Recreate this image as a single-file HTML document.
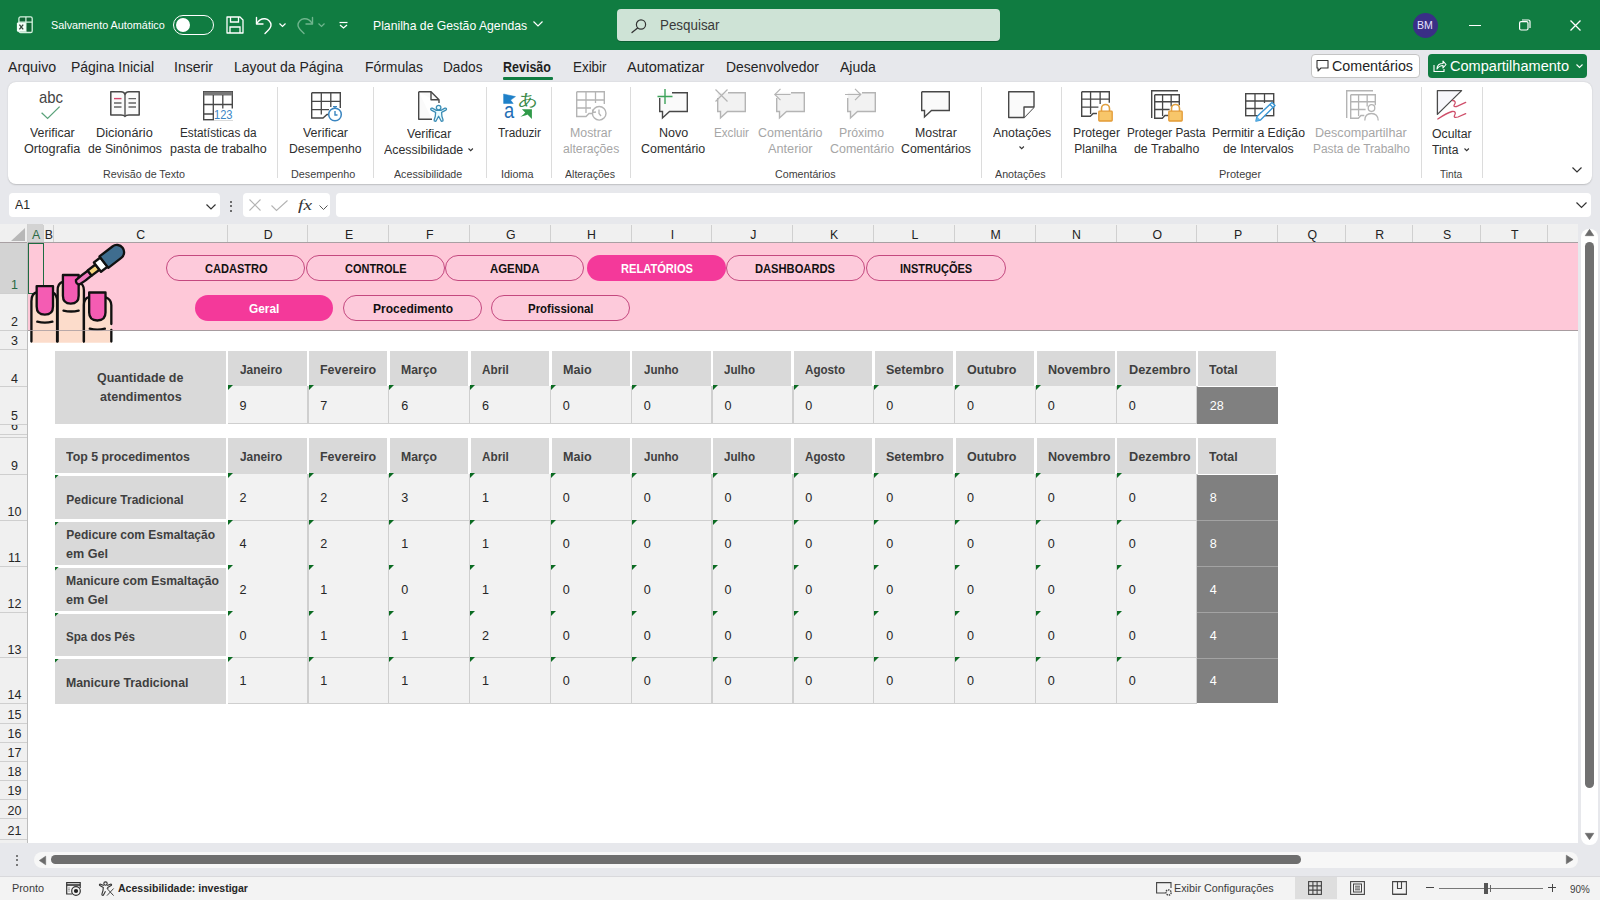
<!DOCTYPE html><html><head><meta charset="utf-8"><style>
html,body{margin:0;padding:0;width:1600px;height:900px;overflow:hidden;background:#fff;font-family:"Liberation Sans",sans-serif}
.t{position:absolute;white-space:nowrap;line-height:1}
svg{overflow:visible}
</style></head><body>
<div style="position:absolute;left:0px;top:0px;width:1600px;height:50px;background:#107C41"></div>
<svg style="position:absolute;left:16px;top:16px;" width="18" height="18" viewBox="0 0 18 18" fill="none"><rect x="2.9" y="0.9" width="13.3" height="15.6" rx="1.6" stroke="#d5f3e0" stroke-width="1.3" fill="#0f6534"/><path d="M9.9 0.9V16.5M2.9 6.1H16.2" stroke="#d5f3e0" stroke-width="1.2"/><rect x="0.9" y="6.4" width="9" height="9.3" rx="1.2" fill="#f2fff7"/><path d="M3.4 8.6L7.2 13.4M7.2 8.6L3.4 13.4" stroke="#34473b" stroke-width="1.3"/></svg>
<div class="t" style="left:50.60px;top:20.09px;font-size:11px;color:#fff;font-weight:400;transform:scaleX(0.9842);transform-origin:0 0;">Salvamento Automático</div>
<div style="position:absolute;left:172.5px;top:14.5px;width:41px;height:20px;border:1.5px solid #fff;border-radius:11px;box-sizing:border-box"></div>
<div style="position:absolute;left:175.5px;top:17.5px;width:14px;height:14px;background:#fff;border-radius:50%"></div>
<svg style="position:absolute;left:226px;top:16px;" width="18" height="18" viewBox="0 0 18 18" fill="none"><path d="M1 1H14L17 4V17H1Z" stroke="#fff" stroke-width="1.3" stroke-linejoin="round"/><path d="M4.5 1V6H12.5V1M4 17V11H14V17" stroke="#fff" stroke-width="1.3"/></svg>
<svg style="position:absolute;left:255px;top:16px;" width="18" height="18" viewBox="0 0 18 18" fill="none"><path d="M1.5 1.5V8H8" stroke="#fff" stroke-width="1.4" stroke-linecap="round" stroke-linejoin="round"/><path d="M1.8 7.5C4 4 7 2.5 10 2.8C13.5 3.2 16 6 16 9C16 11.5 14.5 13 12.5 15L10 17.5" stroke="#fff" stroke-width="1.4" stroke-linecap="round"/></svg>
<svg style="position:absolute;left:279px;top:23px;" width="7" height="4" viewBox="0 0 7 4" fill="none"><path d="M0.5 0.5L3.5 3.5L6.5 0.5" stroke="#fff" stroke-width="1.2"/></svg>
<svg style="position:absolute;left:296px;top:16px;" width="18" height="18" viewBox="0 0 18 18" fill="none"><path d="M16.5 1.5V8H10" stroke="#6fb58d" stroke-width="1.4" stroke-linecap="round" stroke-linejoin="round"/><path d="M16.2 7.5C14 4 11 2.5 8 2.8C4.5 3.2 2 6 2 9C2 11.5 3.5 13 5.5 15L8 17.5" stroke="#6fb58d" stroke-width="1.4" stroke-linecap="round"/></svg>
<svg style="position:absolute;left:318px;top:23px;" width="7" height="4" viewBox="0 0 7 4" fill="none"><path d="M0.5 0.5L3.5 3.5L6.5 0.5" stroke="#6fb58d" stroke-width="1.2"/></svg>
<svg style="position:absolute;left:339px;top:22px;" width="9" height="7" viewBox="0 0 9 7" fill="none"><path d="M0.5 0.5H8.5" stroke="#fff" stroke-width="1.2"/><path d="M1 3L4.5 6L8 3" stroke="#fff" stroke-width="1.3"/></svg>
<div class="t" style="left:373.30px;top:19.00px;font-size:13px;color:#fff;font-weight:400;transform:scaleX(0.9395);transform-origin:0 0;">Planilha de Gestão Agendas</div>
<svg style="position:absolute;left:532.5px;top:21px;" width="10" height="6" viewBox="0 0 10 6" fill="none"><path d="M0.5 0.5L5 5L9.5 0.5" stroke="#fff" stroke-width="1.2"/></svg>
<div style="position:absolute;left:617px;top:8.75px;width:382.5px;height:32.5px;background:#CEE3D6;border-radius:4px;box-shadow:0 1px 0 #0c5f33"></div>
<svg style="position:absolute;left:631px;top:18.5px;" width="16" height="14" viewBox="0 0 16 14" fill="none"><circle cx="10" cy="5.5" r="4.6" stroke="#333" stroke-width="1.2"/><path d="M6.6 9L1 13.6" stroke="#333" stroke-width="1.3" stroke-linecap="round"/></svg>
<div class="t" style="left:660.00px;top:18.15px;font-size:14px;color:#3a3a3a;font-weight:400;transform:scaleX(0.9558);transform-origin:0 0;">Pesquisar</div>
<div style="position:absolute;left:1412.5px;top:12.5px;width:25px;height:25px;background:#3a2f86;border-radius:50%"></div>
<div class="t" style="left:1417.12px;top:20.11px;font-size:10.5px;color:#e6e2ff;font-weight:400;">BM</div>
<div style="position:absolute;left:1468.5px;top:24.5px;width:12px;height:1.2px;background:#fff"></div>
<svg style="position:absolute;left:1519px;top:19px;" width="12" height="12" viewBox="0 0 12 12" fill="none"><rect x="0.6" y="2.6" width="8.4" height="8.4" rx="1.5" stroke="#fff" stroke-width="1.2"/><path d="M3 1H9.5A1.5 1.5 0 0 1 11 2.5V9" stroke="#fff" stroke-width="1.2"/></svg>
<svg style="position:absolute;left:1569.5px;top:19.5px;" width="11" height="11" viewBox="0 0 11 11" fill="none"><path d="M0.5 0.5L10.5 10.5M10.5 0.5L0.5 10.5" stroke="#fff" stroke-width="1.3"/></svg>
<div style="position:absolute;left:0px;top:50px;width:1600px;height:32px;background:#E7E8EC"></div>
<div class="t" style="left:7.80px;top:60.45px;font-size:14px;color:#242424;font-weight:400;transform:scaleX(1.0147);transform-origin:0 0;">Arquivo</div>
<div class="t" style="left:71.00px;top:60.45px;font-size:14px;color:#242424;font-weight:400;transform:scaleX(0.9970);transform-origin:0 0;">Página Inicial</div>
<div class="t" style="left:174.00px;top:60.45px;font-size:14px;color:#242424;font-weight:400;transform:scaleX(1.0032);transform-origin:0 0;">Inserir</div>
<div class="t" style="left:234.00px;top:60.45px;font-size:14px;color:#242424;font-weight:400;">Layout da Página</div>
<div class="t" style="left:365.00px;top:60.45px;font-size:14px;color:#242424;font-weight:400;transform:scaleX(0.9936);transform-origin:0 0;">Fórmulas</div>
<div class="t" style="left:443.00px;top:60.45px;font-size:14px;color:#242424;font-weight:400;transform:scaleX(0.9753);transform-origin:0 0;">Dados</div>
<div class="t" style="left:503.00px;top:60.45px;font-size:14px;color:#1f1f1f;font-weight:700;transform:scaleX(0.8930);transform-origin:0 0;">Revisão</div>
<div class="t" style="left:572.50px;top:60.45px;font-size:14px;color:#242424;font-weight:400;transform:scaleX(0.9571);transform-origin:0 0;">Exibir</div>
<div class="t" style="left:627.00px;top:60.45px;font-size:14px;color:#242424;font-weight:400;transform:scaleX(1.0368);transform-origin:0 0;">Automatizar</div>
<div class="t" style="left:726.00px;top:60.45px;font-size:14px;color:#242424;font-weight:400;transform:scaleX(0.9933);transform-origin:0 0;">Desenvolvedor</div>
<div class="t" style="left:840.00px;top:60.45px;font-size:14px;color:#242424;font-weight:400;transform:scaleX(1.0035);transform-origin:0 0;">Ajuda</div>
<div style="position:absolute;left:502.5px;top:77.3px;width:50.5px;height:2.4px;background:#107C41;border-radius:1px"></div>
<div style="position:absolute;left:1310.5px;top:53.75px;width:109px;height:24.5px;background:#fff;border:1px solid #c4c4c4;border-radius:4px;box-sizing:border-box"></div>
<svg style="position:absolute;left:1316px;top:59px;" width="13" height="13" viewBox="0 0 13 13" fill="none"><path d="M1 1.5H12V9H5L2 12V9H1Z" stroke="#333" stroke-width="1.1" stroke-linejoin="round"/></svg>
<div class="t" style="left:1331.50px;top:59.15px;font-size:14px;color:#242424;font-weight:400;transform:scaleX(1.0205);transform-origin:0 0;">Comentários</div>
<div style="position:absolute;left:1428px;top:53.75px;width:159px;height:24.5px;background:#107C41;border-radius:4px"></div>
<svg style="position:absolute;left:1432.5px;top:58.5px;" width="14" height="14" viewBox="0 0 14 14" fill="none"><path d="M1 6V12.5H11V10" stroke="#fff" stroke-width="1.1"/><path d="M4 10C4 6 6.5 4.5 10 4.5V2L13 5.5L10 9V6.5C7 6.5 5.5 7.8 4 10Z" stroke="#fff" stroke-width="1.1" stroke-linejoin="round"/></svg>
<div class="t" style="left:1450.00px;top:59.15px;font-size:14px;color:#fff;font-weight:400;transform:scaleX(1.0404);transform-origin:0 0;">Compartilhamento</div>
<svg style="position:absolute;left:1575.5px;top:63.5px;" width="7" height="4" viewBox="0 0 7 4" fill="none"><path d="M0.5 0.5L3.5 3.5L6.5 0.5" stroke="#fff" stroke-width="1.1"/></svg>
<div style="position:absolute;left:0px;top:82px;width:1600px;height:141.5px;background:#E7E8EC"></div>
<div style="position:absolute;left:8.3px;top:81.7px;width:1584px;height:102.5px;background:#fff;border-radius:8px;box-shadow:0 0.5px 1.5px rgba(0,0,0,0.18)"></div>
<div class="t" style="left:29.50px;top:126.84px;font-size:12px;color:#2e2e2e;font-weight:400;transform:scaleX(1.0317);transform-origin:0 0;">Verificar</div>
<div class="t" style="left:23.75px;top:143.14px;font-size:12px;color:#2e2e2e;font-weight:400;transform:scaleX(1.0539);transform-origin:0 0;">Ortografia</div>
<div class="t" style="left:96.25px;top:126.84px;font-size:12px;color:#2e2e2e;font-weight:400;transform:scaleX(1.0632);transform-origin:0 0;">Dicionário</div>
<div class="t" style="left:88.00px;top:143.14px;font-size:12px;color:#2e2e2e;font-weight:400;transform:scaleX(1.0172);transform-origin:0 0;">de Sinônimos</div>
<div class="t" style="left:179.50px;top:126.84px;font-size:12px;color:#2e2e2e;font-weight:400;transform:scaleX(0.9824);transform-origin:0 0;">Estatísticas da</div>
<div class="t" style="left:169.50px;top:143.14px;font-size:12px;color:#2e2e2e;font-weight:400;transform:scaleX(1.0431);transform-origin:0 0;">pasta de trabalho</div>
<div class="t" style="left:102.50px;top:169.11px;font-size:10.5px;color:#3d3d3d;font-weight:400;transform:scaleX(1.0202);transform-origin:0 0;">Revisão de Texto</div>
<div style="position:absolute;left:277px;top:87px;width:1px;height:91px;background:#dcdcdc"></div>
<div class="t" style="left:302.50px;top:126.84px;font-size:12px;color:#2e2e2e;font-weight:400;transform:scaleX(1.0375);transform-origin:0 0;">Verificar</div>
<div class="t" style="left:288.75px;top:143.14px;font-size:12px;color:#2e2e2e;font-weight:400;transform:scaleX(1.0158);transform-origin:0 0;">Desempenho</div>
<div class="t" style="left:291.25px;top:169.11px;font-size:10.5px;color:#3d3d3d;font-weight:400;transform:scaleX(1.0280);transform-origin:0 0;">Desempenho</div>
<div style="position:absolute;left:372.5px;top:87px;width:1px;height:91px;background:#dcdcdc"></div>
<div class="t" style="left:407.00px;top:127.84px;font-size:12px;color:#2e2e2e;font-weight:400;transform:scaleX(1.0202);transform-origin:0 0;">Verificar</div>
<div class="t" style="left:383.75px;top:144.34px;font-size:12px;color:#2e2e2e;font-weight:400;transform:scaleX(1.0326);transform-origin:0 0;">Acessibilidade</div>
<svg style="position:absolute;left:468.2px;top:147.8px;" width="5.4" height="3.2" viewBox="0 0 5.4 3.2" fill="none"><path d="M0.5 0.5L2.7 2.7L4.9 0.5" stroke="#333" stroke-width="1.1"/></svg>
<div class="t" style="left:393.75px;top:169.11px;font-size:10.5px;color:#3d3d3d;font-weight:400;transform:scaleX(1.0168);transform-origin:0 0;">Acessibilidade</div>
<div style="position:absolute;left:485.5px;top:87px;width:1px;height:91px;background:#dcdcdc"></div>
<div class="t" style="left:497.50px;top:126.84px;font-size:12px;color:#2e2e2e;font-weight:400;transform:scaleX(0.9857);transform-origin:0 0;">Traduzir</div>
<div class="t" style="left:501.25px;top:169.11px;font-size:10.5px;color:#3d3d3d;font-weight:400;transform:scaleX(1.0317);transform-origin:0 0;">Idioma</div>
<div style="position:absolute;left:551.25px;top:87px;width:1px;height:91px;background:#dcdcdc"></div>
<div class="t" style="left:569.50px;top:126.84px;font-size:12px;color:#a6a6a6;font-weight:400;transform:scaleX(1.0277);transform-origin:0 0;">Mostrar</div>
<div class="t" style="left:562.50px;top:143.14px;font-size:12px;color:#a6a6a6;font-weight:400;transform:scaleX(1.0158);transform-origin:0 0;">alterações</div>
<div class="t" style="left:564.50px;top:169.11px;font-size:10.5px;color:#3d3d3d;font-weight:400;transform:scaleX(1.0076);transform-origin:0 0;">Alterações</div>
<div style="position:absolute;left:629.5px;top:87px;width:1px;height:91px;background:#dcdcdc"></div>
<div class="t" style="left:658.75px;top:126.84px;font-size:12px;color:#2e2e2e;font-weight:400;transform:scaleX(1.0446);transform-origin:0 0;">Novo</div>
<div class="t" style="left:640.75px;top:143.14px;font-size:12px;color:#2e2e2e;font-weight:400;transform:scaleX(1.0363);transform-origin:0 0;">Comentário</div>
<div class="t" style="left:713.75px;top:126.84px;font-size:12px;color:#a6a6a6;font-weight:400;transform:scaleX(0.9722);transform-origin:0 0;">Excluir</div>
<div class="t" style="left:757.50px;top:126.84px;font-size:12px;color:#a6a6a6;font-weight:400;transform:scaleX(1.0403);transform-origin:0 0;">Comentário</div>
<div class="t" style="left:768.00px;top:143.14px;font-size:12px;color:#a6a6a6;font-weight:400;transform:scaleX(1.0595);transform-origin:0 0;">Anterior</div>
<div class="t" style="left:838.75px;top:126.84px;font-size:12px;color:#a6a6a6;font-weight:400;transform:scaleX(1.0227);transform-origin:0 0;">Próximo</div>
<div class="t" style="left:829.50px;top:143.14px;font-size:12px;color:#a6a6a6;font-weight:400;transform:scaleX(1.0363);transform-origin:0 0;">Comentário</div>
<div class="t" style="left:914.50px;top:126.84px;font-size:12px;color:#2e2e2e;font-weight:400;transform:scaleX(1.0277);transform-origin:0 0;">Mostrar</div>
<div class="t" style="left:900.75px;top:143.14px;font-size:12px;color:#2e2e2e;font-weight:400;transform:scaleX(1.0294);transform-origin:0 0;">Comentários</div>
<div class="t" style="left:774.50px;top:169.11px;font-size:10.5px;color:#3d3d3d;font-weight:400;transform:scaleX(1.0168);transform-origin:0 0;">Comentários</div>
<div style="position:absolute;left:981.25px;top:87px;width:1px;height:91px;background:#dcdcdc"></div>
<div class="t" style="left:992.50px;top:126.84px;font-size:12px;color:#2e2e2e;font-weight:400;transform:scaleX(1.0264);transform-origin:0 0;">Anotações</div>
<svg style="position:absolute;left:1018.6px;top:146.3px;" width="5.4" height="3.2" viewBox="0 0 5.4 3.2" fill="none"><path d="M0.5 0.5L2.7 2.7L4.9 0.5" stroke="#333" stroke-width="1.1"/></svg>
<div class="t" style="left:995.00px;top:169.11px;font-size:10.5px;color:#3d3d3d;font-weight:400;transform:scaleX(1.0176);transform-origin:0 0;">Anotações</div>
<div style="position:absolute;left:1061.25px;top:87px;width:1px;height:91px;background:#dcdcdc"></div>
<div class="t" style="left:1072.50px;top:126.84px;font-size:12px;color:#2e2e2e;font-weight:400;transform:scaleX(1.0217);transform-origin:0 0;">Proteger</div>
<div class="t" style="left:1074.25px;top:143.14px;font-size:12px;color:#2e2e2e;font-weight:400;">Planilha</div>
<div class="t" style="left:1126.75px;top:126.84px;font-size:12px;color:#2e2e2e;font-weight:400;transform:scaleX(0.9816);transform-origin:0 0;">Proteger Pasta</div>
<div class="t" style="left:1133.75px;top:143.14px;font-size:12px;color:#2e2e2e;font-weight:400;transform:scaleX(1.0296);transform-origin:0 0;">de Trabalho</div>
<div class="t" style="left:1212.25px;top:126.84px;font-size:12px;color:#2e2e2e;font-weight:400;transform:scaleX(1.0172);transform-origin:0 0;">Permitir a Edição</div>
<div class="t" style="left:1223.25px;top:143.14px;font-size:12px;color:#2e2e2e;font-weight:400;transform:scaleX(1.0291);transform-origin:0 0;">de Intervalos</div>
<div class="t" style="left:1315.40px;top:126.84px;font-size:12px;color:#a6a6a6;font-weight:400;transform:scaleX(1.0484);transform-origin:0 0;">Descompartilhar</div>
<div class="t" style="left:1312.60px;top:143.14px;font-size:12px;color:#a6a6a6;font-weight:400;transform:scaleX(0.9941);transform-origin:0 0;">Pasta de Trabalho</div>
<div class="t" style="left:1219.10px;top:169.11px;font-size:10.5px;color:#3d3d3d;font-weight:400;transform:scaleX(1.0460);transform-origin:0 0;">Proteger</div>
<div style="position:absolute;left:1420.6px;top:87px;width:1px;height:91px;background:#dcdcdc"></div>
<div class="t" style="left:1432.00px;top:127.84px;font-size:12px;color:#2e2e2e;font-weight:400;transform:scaleX(1.0227);transform-origin:0 0;">Ocultar</div>
<div class="t" style="left:1432.00px;top:144.34px;font-size:12px;color:#2e2e2e;font-weight:400;transform:scaleX(1.0057);transform-origin:0 0;">Tinta</div>
<svg style="position:absolute;left:1464px;top:147.8px;" width="5.4" height="3.2" viewBox="0 0 5.4 3.2" fill="none"><path d="M0.5 0.5L2.7 2.7L4.9 0.5" stroke="#333" stroke-width="1.1"/></svg>
<div class="t" style="left:1439.80px;top:169.11px;font-size:10.5px;color:#3d3d3d;font-weight:400;transform:scaleX(0.9652);transform-origin:0 0;">Tinta</div>
<div style="position:absolute;left:1482px;top:87px;width:1px;height:91px;background:#dcdcdc"></div>
<svg style="position:absolute;left:1572px;top:167px;" width="10" height="6" viewBox="0 0 10 6" fill="none"><path d="M0.5 0.5L5 5L9.5 0.5" stroke="#333" stroke-width="1.2"/></svg>
<div class="t" style="left:39.00px;top:88.61px;font-size:17px;color:#444;font-weight:400;transform:scaleX(0.8767);transform-origin:0 0;">abc</div>
<svg style="position:absolute;left:41px;top:106px;" width="19" height="13" viewBox="0 0 19 13" fill="none"><path d="M0.6 6.8L6.6 12.4L18.6 0.6" stroke="#5aa27a" stroke-width="1.3"/></svg>
<svg style="position:absolute;left:109.5px;top:91.4px;" width="30" height="26" viewBox="0 0 30 26" fill="none"><path d="M0.8 0.8H11C13 0.8 14.5 2 15 3.5C15.5 2 17 0.8 19 0.8H29.2V24H19C17 24 15.5 24.6 15 25.5C14.5 24.6 13 24 11 24H0.8Z" stroke="#474747" stroke-width="1.5" stroke-linejoin="round" fill="#fafafa"/><path d="M15 3.5V25" stroke="#474747" stroke-width="1.3"/><path d="M4 7.6H11.5" stroke="#d2466c" stroke-width="1.4"/><path d="M4 12H11.5M4 16H11.5M18.5 7.6H26M18.5 12H26M18.5 16H26" stroke="#666" stroke-width="1.4"/></svg>
<svg style="position:absolute;left:203px;top:90.5px;" width="30" height="30" viewBox="0 0 30 30" fill="none"><rect x="0.7" y="0.7" width="28.6" height="28" stroke="#474747" stroke-width="1.4" fill="#fff"/><rect x="0.7" y="0.7" width="28.6" height="3.8" fill="#777"/><path d="M10.3 4V28.7M19.8 4V18M0.7 13.5H29M0.7 23H11" stroke="#474747" stroke-width="1.3"/><rect x="11" y="17.5" width="19" height="12" fill="#fff"/></svg>
<div class="t" style="left:213.50px;top:108.07px;font-size:13.5px;color:#3b86c6;font-weight:400;transform:scaleX(0.8222);transform-origin:0 0;">123</div>
<svg style="position:absolute;left:310.5px;top:91.5px;" width="32" height="30" viewBox="0 0 32 30" fill="none"><path d="M0.7 0.7H29.3V16M0.7 0.7V26H12L16 22.5H20" stroke="#474747" stroke-width="1.4" fill="none"/><path d="M10.3 1V22.5M19.8 1V15M0.7 9.3H29.3M0.7 17.7H18" stroke="#474747" stroke-width="1.3"/><circle cx="24" cy="22.5" r="6.3" stroke="#3a85c0" stroke-width="1.5" fill="#fff"/><path d="M24 19V23H26.5M22 14.6H26M24 14.6V16" stroke="#3a85c0" stroke-width="1.4"/></svg>
<svg style="position:absolute;left:417.7px;top:90.7px;" width="30" height="32" viewBox="0 0 30 32" fill="none"><path d="M0.7 0.7H13L21 8.7V12M14 28.3H0.7V0.7" stroke="#474747" stroke-width="1.4" stroke-linejoin="round" fill="#fafafa"/><path d="M13 0.7V8.7H21" stroke="#474747" stroke-width="1.4" stroke-linejoin="round" fill="none"/></svg>
<svg style="position:absolute;left:425px;top:100px;" width="25" height="25" viewBox="0 0 25 25" fill="none"><circle cx="13.6" cy="7.6" r="2.3" stroke="#3b8db5" stroke-width="1.3" fill="#e8fbff"/><path d="M11.3 10.3L7.3 8.2C6 7.6 5 9.4 6.3 10.2L10.6 12.4L10.3 16.3L9.2 19.8C8.8 21.3 10.8 21.8 11.3 20.5L13.6 16.3L15.9 20.5C16.4 21.8 18.4 21.3 18 19.8L16.9 16.3L16.6 12.4L20.9 10.2C22.2 9.4 21.2 7.6 19.9 8.2L15.9 10.3Z" stroke="#3b8db5" stroke-width="1.3" stroke-linejoin="round" fill="#e8fbff"/></svg>
<svg style="position:absolute;left:500px;top:88px;" width="36" height="34" viewBox="0 0 36 34" fill="none"><path d="M3.6 6L15.5 8.6L10.6 12.1L13.2 15.5H3.6Z" fill="#1f80c8" stroke="#1f80c8" stroke-width="0.5" stroke-linejoin="round"/><path d="M21.9 21.3H31.9V30.9L27.5 26.5C25.5 27.5 23 28.3 20.4 28.7C22.3 27.4 24.2 25.8 25.2 24.4Z" fill="#2f9a48"/></svg>
<div class="t" style="left:503.60px;top:100.28px;font-size:22px;color:#1f6fb5;font-weight:400;transform:scaleX(0.8327);transform-origin:0 0;">a</div>
<div class="t" style="left:517.70px;top:91.68px;font-size:15.5px;color:#3a8a48;font-weight:400;transform:scaleX(1.2301);transform-origin:0 0;font-family:sans-serif;">あ</div>
<svg style="position:absolute;left:576.4px;top:91.1px;" width="32" height="30" viewBox="0 0 32 30" fill="none"><path d="M0.7 0.7H28.3V13M0.7 0.7V25.5H10L13 22.5H16" stroke="#b4b4b4" stroke-width="1.4" fill="none"/><path d="M10 1V22M19.5 1V12M0.7 9H28M0.7 17H15" stroke="#b4b4b4" stroke-width="1.3"/><circle cx="23.2" cy="22.3" r="6.8" stroke="#b4b4b4" stroke-width="1.4" fill="#fff"/><path d="M23 18.5V22.5L25 25" stroke="#b4b4b4" stroke-width="1.3"/><path d="M16.5 18.5L17 21.5L20 21" stroke="#b4b4b4" stroke-width="1.3" fill="none"/></svg>
<svg style="position:absolute;left:659px;top:91.5px;" width="30" height="28" viewBox="0 0 30 28" fill="none"><path d="M0.7 0.7H28.3V19.5H10.5L3.5 26V19.5H0.7Z" fill="#fafafa"/><path d="M13 0.7H28.3V19.5H10.5L3.5 26V19.5H0.7V6" stroke="#474747" stroke-width="1.4" stroke-linejoin="miter" fill="none"/></svg>
<svg style="position:absolute;left:656.5px;top:88.5px;" width="16" height="16" viewBox="0 0 16 16" fill="none"><path d="M8 0V15M0.5 7.5H15.5" stroke="#3da35a" stroke-width="1.4"/></svg>
<svg style="position:absolute;left:717px;top:91.5px;" width="30" height="28" viewBox="0 0 30 28" fill="none"><path d="M0.7 0.7H28.3V19.5H10.5L3.5 26V19.5H0.7Z" fill="#f2f2f2"/><path d="M11 0.7H28.3V19.5H10.5L3.5 26V19.5H0.7V6" stroke="#b4b4b4" stroke-width="1.4" stroke-linejoin="miter" fill="none"/></svg>
<svg style="position:absolute;left:715px;top:88.5px;" width="13" height="13" viewBox="0 0 13 13" fill="none"><path d="M0.5 0.5L12.5 12.5M12.5 0.5L0.5 12.5" stroke="#b4b4b4" stroke-width="1.2"/></svg>
<svg style="position:absolute;left:775.6px;top:91.5px;" width="30" height="28" viewBox="0 0 30 28" fill="none"><path d="M0.7 0.7H28.3V19.5H10.5L3.5 26V19.5H0.7Z" fill="#f2f2f2"/><path d="M15 0.7H28.3V19.5H10.5L3.5 26V19.5H0.7V6" stroke="#b4b4b4" stroke-width="1.4" stroke-linejoin="miter" fill="none"/></svg>
<svg style="position:absolute;left:773.5px;top:88px;" width="17" height="13" viewBox="0 0 17 13" fill="none"><path d="M16.5 6.5H1M6.5 0.8L0.8 6.5L6.5 12.2" stroke="#b4b4b4" stroke-width="1.2"/></svg>
<svg style="position:absolute;left:847.3px;top:91.5px;" width="30" height="28" viewBox="0 0 30 28" fill="none"><path d="M0.7 0.7H28.3V19.5H10.5L3.5 26V19.5H0.7Z" fill="#f2f2f2"/><path d="M15 0.7H28.3V19.5H10.5L3.5 26V19.5H0.7V6" stroke="#b4b4b4" stroke-width="1.4" stroke-linejoin="miter" fill="none"/></svg>
<svg style="position:absolute;left:845px;top:88px;" width="17" height="13" viewBox="0 0 17 13" fill="none"><path d="M0 6.5H15.5M10 0.8L15.7 6.5L10 12.2" stroke="#b4b4b4" stroke-width="1.2"/></svg>
<svg style="position:absolute;left:921.2px;top:91.3px;" width="30" height="28" viewBox="0 0 30 28" fill="none"><path d="M0.7 0.7H28.3V19.5H10.5L3.5 26V19.5H0.7Z" fill="#fafafa"/><path d="M0.7 0.7H28.3V19.5H10.5L3.5 26V19.5H0.7V0.7" stroke="#474747" stroke-width="1.4" stroke-linejoin="miter" fill="none"/></svg>
<svg style="position:absolute;left:1008.2px;top:91.3px;" width="28" height="28" viewBox="0 0 28 28" fill="none"><path d="M0.7 0.7H26V16L16 26.5H0.7Z" stroke="#474747" stroke-width="1.4" stroke-linejoin="round" fill="#fafafa"/><path d="M16 26.5V16H26" stroke="#474747" stroke-width="1.4" stroke-linejoin="round" fill="#fff"/></svg>
<svg style="position:absolute;left:1081.2px;top:91.3px;" width="31" height="28" viewBox="0 0 31 28" fill="none"><path d="M0.7 0.7H28.3V11.700000000000001M0.7 0.7V25.3H9.28L12.18 22.5H15.950000000000001" stroke="#474747" stroke-width="1.4" fill="none"/><path d="M9.57 1V23M19.14 1V13.0M0.7 8.06H28M0.7 16.12H17.4" stroke="#474747" stroke-width="1.3"/></svg>
<svg style="position:absolute;left:1098px;top:102.5px;" width="15" height="19" viewBox="0 0 15 19" fill="none"><path d="M3.5 8.5V5.5A4 4 0 0 1 11.5 5.5V8.5" stroke="#e0a040" stroke-width="1.6" fill="none"/><rect x="0.8" y="8.2" width="13.4" height="9.8" rx="0.8" fill="#f7c66a" stroke="#e39a35" stroke-width="1.3"/></svg>
<svg style="position:absolute;left:1151px;top:90.4px;" width="28" height="30" viewBox="0 0 28 30" fill="none"><path d="M0.7 28V0.7H27" stroke="#474747" stroke-width="1.4" fill="none"/></svg>
<svg style="position:absolute;left:1154.2px;top:93.5px;" width="28" height="27" viewBox="0 0 28 27" fill="none"><path d="M0.7 0.7H25.3V11.25M0.7 0.7V24.3H8.32L10.92 21.5H14.3" stroke="#474747" stroke-width="1.4" fill="none"/><path d="M8.58 1V22M17.16 1V12.5M0.7 7.75H25M0.7 15.5H15.6" stroke="#474747" stroke-width="1.3"/></svg>
<svg style="position:absolute;left:1168px;top:102.5px;" width="15" height="19" viewBox="0 0 15 19" fill="none"><path d="M3.5 8.5V5.5A4 4 0 0 1 11.5 5.5V8.5" stroke="#e0a040" stroke-width="1.6" fill="none"/><rect x="0.8" y="8.2" width="13.4" height="9.8" rx="0.8" fill="#f7c66a" stroke="#e39a35" stroke-width="1.3"/></svg>
<svg style="position:absolute;left:1244.7px;top:93.3px;" width="30" height="24" viewBox="0 0 30 24" fill="none"><rect x="0.7" y="0.7" width="28" height="22" stroke="#474747" stroke-width="1.4" fill="#fff"/><path d="M10 1V22M19.5 1V10M0.7 8H28M0.7 15.5H18" stroke="#474747" stroke-width="1.3"/></svg>
<svg style="position:absolute;left:1254.5px;top:100.5px;" width="22" height="21" viewBox="0 0 22 21" fill="none"><path d="M17 1.5L20 4.5L5.5 19L1 20L2 15.5Z" stroke="#3a96d4" stroke-width="1.4" stroke-linejoin="round" fill="#ffffff"/><path d="M1.5 17.5L1 20L3.5 19.5Z" fill="#3a96d4"/><path d="M15 3.5L18 6.5" stroke="#3a96d4" stroke-width="1.3"/><path d="M2 15.5L5.5 19L1 20Z" fill="#62b6e8"/></svg>
<svg style="position:absolute;left:1346.2px;top:90.4px;" width="28" height="30" viewBox="0 0 28 30" fill="none"><path d="M0.7 28V0.7H27" stroke="#b4b4b4" stroke-width="1.4" fill="none"/></svg>
<svg style="position:absolute;left:1349.5px;top:93.5px;" width="28" height="27" viewBox="0 0 28 27" fill="none"><path d="M0.7 0.7H25.3V11.25M0.7 0.7V24.3H8.32L10.92 21.5H14.3" stroke="#b4b4b4" stroke-width="1.4" fill="none"/><path d="M8.58 1V22M17.16 1V12.5M0.7 7.75H25M0.7 15.5H15.6" stroke="#b4b4b4" stroke-width="1.3"/></svg>
<svg style="position:absolute;left:1364px;top:104px;" width="15" height="17" viewBox="0 0 15 17" fill="none"><circle cx="7.5" cy="4" r="3.3" stroke="#b4b4b4" stroke-width="1.3" fill="#fff"/><path d="M0.8 16.5C0.8 12 3.5 9.5 7.5 9.5S14.2 12 14.2 16.5" stroke="#b4b4b4" stroke-width="1.3" fill="#fff"/></svg>
<svg style="position:absolute;left:1434px;top:88px;" width="36" height="34" viewBox="0 0 36 34" fill="none"><path d="M3.4 2.6H27.6L3.4 26.4Z" stroke="#4a4a4a" stroke-width="1.3" stroke-linejoin="round" fill="#f7f7fb"/><path d="M18.5 12.5C21.5 12.8 22 14.5 20.3 16.8C19.2 18.5 21 19.2 23.5 18.2L31.7 14.4M3.8 31C9 27.5 14 24.5 18 23.5C21.5 23 22 25 20.5 27.5C19.5 29.5 21.5 29.8 24 29L31.7 25.7" stroke="#cf4f6a" stroke-width="1.3" fill="none" stroke-linecap="round"/></svg>
<div style="position:absolute;left:9px;top:193.25px;width:211px;height:23.75px;background:#fff;border-radius:4px"></div>
<div class="t" style="left:14.50px;top:199.42px;font-size:12.5px;color:#262626;font-weight:400;transform:scaleX(0.9836);transform-origin:0 0;">A1</div>
<svg style="position:absolute;left:206px;top:204px;" width="10" height="6" viewBox="0 0 10 6" fill="none"><path d="M0.5 0.5L5 5L9.5 0.5" stroke="#333" stroke-width="1.2"/></svg>
<div style="position:absolute;left:230px;top:200.5px;width:2.2px;height:2.2px;background:#444;border-radius:50%"></div>
<div style="position:absolute;left:230px;top:205.0px;width:2.2px;height:2.2px;background:#444;border-radius:50%"></div>
<div style="position:absolute;left:230px;top:209.5px;width:2.2px;height:2.2px;background:#444;border-radius:50%"></div>
<div style="position:absolute;left:242.5px;top:193.25px;width:87.5px;height:23.75px;background:#fff;border-radius:4px"></div>
<svg style="position:absolute;left:249px;top:199px;" width="12" height="12" viewBox="0 0 12 12" fill="none"><path d="M0.5 0.5L11.5 11.5M11.5 0.5L0.5 11.5" stroke="#b3b3b3" stroke-width="1.1"/></svg>
<svg style="position:absolute;left:271px;top:199.5px;" width="17" height="11" viewBox="0 0 17 11" fill="none"><path d="M0.5 5.5L5.5 10.5L16.5 0.5" stroke="#b3b3b3" stroke-width="1.1"/></svg>
<div class="t" style="left:297.50px;top:198.30px;font-size:15px;color:#333;font-weight:400;transform:scaleX(1.2903);transform-origin:0 0;font-family:'Liberation Serif',serif;font-style:italic;">fx</div>
<svg style="position:absolute;left:319px;top:204.5px;" width="9" height="5" viewBox="0 0 9 5" fill="none"><path d="M0.5 0.5L4.5 4.5L8.5 0.5" stroke="#555" stroke-width="1"/></svg>
<div style="position:absolute;left:335.5px;top:193.25px;width:1255px;height:23.75px;background:#fff;border-radius:4px"></div>
<svg style="position:absolute;left:1576px;top:201.5px;" width="11" height="7" viewBox="0 0 11 7" fill="none"><path d="M0.5 0.5L5.5 5.5L10.5 0.5" stroke="#333" stroke-width="1.2"/></svg>
<div style="position:absolute;left:0px;top:223.5px;width:1578px;height:19.5px;background:#F0F0F0"></div>
<div style="position:absolute;left:0px;top:243px;width:1578px;height:600px;background:#fff"></div>
<div style="position:absolute;left:27.5px;top:223.5px;width:15.799999999999997px;height:19.5px;background:#D3D3D3"></div>
<div style="position:absolute;left:42.8px;top:224.5px;width:1px;height:18.5px;background:#d0d0d0"></div>
<div class="t" style="left:32.07px;top:229.09px;font-size:12.3px;color:#2a6a45;font-weight:400;">A</div>
<div style="position:absolute;left:52.5px;top:224.5px;width:1px;height:18.5px;background:#d0d0d0"></div>
<div class="t" style="left:44.82px;top:229.09px;font-size:12.3px;color:#222;font-weight:400;">B</div>
<div style="position:absolute;left:226.5px;top:224.5px;width:1px;height:18.5px;background:#d0d0d0"></div>
<div class="t" style="left:136.36px;top:229.09px;font-size:12.3px;color:#222;font-weight:400;">C</div>
<div style="position:absolute;left:307.33px;top:224.5px;width:1px;height:18.5px;background:#d0d0d0"></div>
<div class="t" style="left:263.78px;top:229.09px;font-size:12.3px;color:#222;font-weight:400;">D</div>
<div style="position:absolute;left:388.15999999999997px;top:224.5px;width:1px;height:18.5px;background:#d0d0d0"></div>
<div class="t" style="left:344.92px;top:229.09px;font-size:12.3px;color:#222;font-weight:400;">E</div>
<div style="position:absolute;left:468.99px;top:224.5px;width:1px;height:18.5px;background:#d0d0d0"></div>
<div class="t" style="left:426.12px;top:229.09px;font-size:12.3px;color:#222;font-weight:400;">F</div>
<div style="position:absolute;left:549.8199999999999px;top:224.5px;width:1px;height:18.5px;background:#d0d0d0"></div>
<div class="t" style="left:505.89px;top:229.09px;font-size:12.3px;color:#222;font-weight:400;">G</div>
<div style="position:absolute;left:630.65px;top:224.5px;width:1px;height:18.5px;background:#d0d0d0"></div>
<div class="t" style="left:587.10px;top:229.09px;font-size:12.3px;color:#222;font-weight:400;">H</div>
<div style="position:absolute;left:711.48px;top:224.5px;width:1px;height:18.5px;background:#d0d0d0"></div>
<div class="t" style="left:670.68px;top:229.09px;font-size:12.3px;color:#222;font-weight:400;">I</div>
<div style="position:absolute;left:792.31px;top:224.5px;width:1px;height:18.5px;background:#d0d0d0"></div>
<div class="t" style="left:750.13px;top:229.09px;font-size:12.3px;color:#222;font-weight:400;">J</div>
<div style="position:absolute;left:873.14px;top:224.5px;width:1px;height:18.5px;background:#d0d0d0"></div>
<div class="t" style="left:829.90px;top:229.09px;font-size:12.3px;color:#222;font-weight:400;">K</div>
<div style="position:absolute;left:953.97px;top:224.5px;width:1px;height:18.5px;background:#d0d0d0"></div>
<div class="t" style="left:911.42px;top:229.09px;font-size:12.3px;color:#222;font-weight:400;">L</div>
<div style="position:absolute;left:1034.8px;top:224.5px;width:1px;height:18.5px;background:#d0d0d0"></div>
<div class="t" style="left:990.56px;top:229.09px;font-size:12.3px;color:#222;font-weight:400;">M</div>
<div style="position:absolute;left:1115.63px;top:224.5px;width:1px;height:18.5px;background:#d0d0d0"></div>
<div class="t" style="left:1072.08px;top:229.09px;font-size:12.3px;color:#222;font-weight:400;">N</div>
<div style="position:absolute;left:1196.46px;top:224.5px;width:1px;height:18.5px;background:#d0d0d0"></div>
<div class="t" style="left:1152.53px;top:229.09px;font-size:12.3px;color:#222;font-weight:400;">O</div>
<div style="position:absolute;left:1277.29px;top:224.5px;width:1px;height:18.5px;background:#d0d0d0"></div>
<div class="t" style="left:1234.05px;top:229.09px;font-size:12.3px;color:#222;font-weight:400;">P</div>
<div style="position:absolute;left:1344.74px;top:224.5px;width:1px;height:18.5px;background:#d0d0d0"></div>
<div class="t" style="left:1307.50px;top:229.09px;font-size:12.3px;color:#222;font-weight:400;">Q</div>
<div style="position:absolute;left:1412.19px;top:224.5px;width:1px;height:18.5px;background:#d0d0d0"></div>
<div class="t" style="left:1375.33px;top:229.09px;font-size:12.3px;color:#222;font-weight:400;">R</div>
<div style="position:absolute;left:1479.64px;top:224.5px;width:1px;height:18.5px;background:#d0d0d0"></div>
<div class="t" style="left:1443.09px;top:229.09px;font-size:12.3px;color:#222;font-weight:400;">S</div>
<div style="position:absolute;left:1547.0900000000001px;top:224.5px;width:1px;height:18.5px;background:#d0d0d0"></div>
<div class="t" style="left:1510.92px;top:229.09px;font-size:12.3px;color:#222;font-weight:400;">T</div>
<div style="position:absolute;left:1577.5px;top:224.5px;width:1px;height:18.5px;background:#d0d0d0"></div>
<div style="position:absolute;left:0px;top:242.4px;width:1578px;height:1px;background:#a8a0a3"></div>
<svg style="position:absolute;left:11px;top:227.5px;" width="14" height="13" viewBox="0 0 14 13" fill="none"><path d="M14 0V13H0Z" fill="#b8b8b8"/></svg>
<div style="position:absolute;left:27px;top:223.5px;width:0.8px;height:19.5px;background:#d0d0d0"></div>
<div style="position:absolute;left:0px;top:243px;width:27.5px;height:600px;background:#F0F0F0"></div>
<div style="position:absolute;left:0px;top:243px;width:27.5px;height:50.5px;background:#D3D3D3"></div>
<div style="position:absolute;left:0px;top:293.0px;width:27.5px;height:1px;background:#cfcfcf"></div>
<div class="t" style="left:11.00px;top:279.32px;font-size:12.5px;color:#2a6a45;font-weight:400;">1</div>
<div style="position:absolute;left:0px;top:330.0px;width:27.5px;height:1px;background:#cfcfcf"></div>
<div class="t" style="left:11.00px;top:316.32px;font-size:12.5px;color:#262626;font-weight:400;">2</div>
<div style="position:absolute;left:0px;top:349.0px;width:27.5px;height:1px;background:#cfcfcf"></div>
<div class="t" style="left:11.00px;top:335.32px;font-size:12.5px;color:#262626;font-weight:400;">3</div>
<div style="position:absolute;left:0px;top:386.3px;width:27.5px;height:1px;background:#cfcfcf"></div>
<div class="t" style="left:11.00px;top:372.62px;font-size:12.5px;color:#262626;font-weight:400;">4</div>
<div style="position:absolute;left:0px;top:423.8px;width:27.5px;height:1px;background:#cfcfcf"></div>
<div class="t" style="left:11.00px;top:410.12px;font-size:12.5px;color:#262626;font-weight:400;">5</div>
<div style="position:absolute;left:0px;top:433.9px;width:27.5px;height:1px;background:#cfcfcf"></div>
<div style="position:absolute;left:0;top:424.8px;width:27px;height:9.6px;overflow:hidden">
<div class="t" style="left:11.00px;top:-4.68px;font-size:12.5px;color:#262626;font-weight:400;">6</div>
</div>
<div style="position:absolute;left:0px;top:473.9px;width:27.5px;height:1px;background:#cfcfcf"></div>
<div class="t" style="left:11.00px;top:460.22px;font-size:12.5px;color:#262626;font-weight:400;">9</div>
<div style="position:absolute;left:0px;top:520.0px;width:27.5px;height:1px;background:#cfcfcf"></div>
<div class="t" style="left:7.56px;top:506.32px;font-size:12.5px;color:#262626;font-weight:400;">10</div>
<div style="position:absolute;left:0px;top:565.7px;width:27.5px;height:1px;background:#cfcfcf"></div>
<div class="t" style="left:8.00px;top:552.02px;font-size:12.5px;color:#262626;font-weight:400;">11</div>
<div style="position:absolute;left:0px;top:611.7px;width:27.5px;height:1px;background:#cfcfcf"></div>
<div class="t" style="left:7.56px;top:598.02px;font-size:12.5px;color:#262626;font-weight:400;">12</div>
<div style="position:absolute;left:0px;top:657.3px;width:27.5px;height:1px;background:#cfcfcf"></div>
<div class="t" style="left:7.56px;top:643.62px;font-size:12.5px;color:#262626;font-weight:400;">13</div>
<div style="position:absolute;left:0px;top:703.0px;width:27.5px;height:1px;background:#cfcfcf"></div>
<div class="t" style="left:7.56px;top:689.32px;font-size:12.5px;color:#262626;font-weight:400;">14</div>
<div style="position:absolute;left:0px;top:722.5px;width:27.5px;height:1px;background:#cfcfcf"></div>
<div class="t" style="left:7.56px;top:708.82px;font-size:12.5px;color:#262626;font-weight:400;">15</div>
<div style="position:absolute;left:0px;top:742.0px;width:27.5px;height:1px;background:#cfcfcf"></div>
<div class="t" style="left:7.56px;top:728.32px;font-size:12.5px;color:#262626;font-weight:400;">16</div>
<div style="position:absolute;left:0px;top:760.8px;width:27.5px;height:1px;background:#cfcfcf"></div>
<div class="t" style="left:7.56px;top:747.12px;font-size:12.5px;color:#262626;font-weight:400;">17</div>
<div style="position:absolute;left:0px;top:780.0px;width:27.5px;height:1px;background:#cfcfcf"></div>
<div class="t" style="left:7.56px;top:766.32px;font-size:12.5px;color:#262626;font-weight:400;">18</div>
<div style="position:absolute;left:0px;top:799.0px;width:27.5px;height:1px;background:#cfcfcf"></div>
<div class="t" style="left:7.56px;top:785.32px;font-size:12.5px;color:#262626;font-weight:400;">19</div>
<div style="position:absolute;left:0px;top:818.3px;width:27.5px;height:1px;background:#cfcfcf"></div>
<div class="t" style="left:7.56px;top:804.62px;font-size:12.5px;color:#262626;font-weight:400;">20</div>
<div style="position:absolute;left:0px;top:838.8px;width:27.5px;height:1px;background:#cfcfcf"></div>
<div class="t" style="left:7.56px;top:825.12px;font-size:12.5px;color:#262626;font-weight:400;">21</div>
<div style="position:absolute;left:0px;top:857.5px;width:27.5px;height:1px;background:#cfcfcf"></div>
<div style="position:absolute;left:0px;top:437.1px;width:27.5px;height:1px;background:#cfcfcf"></div>
<div style="position:absolute;left:27.2px;top:243px;width:1px;height:600px;background:#bdbdbd"></div>
<div style="position:absolute;left:28px;top:243px;width:1550px;height:87.5px;background:#FEC8D8"></div>
<div style="position:absolute;left:28px;top:330px;width:1550px;height:1px;background:#a89ca0"></div>
<div style="position:absolute;left:27.5px;top:243px;width:16.5px;height:51px;border:1.5px solid #1e6b41;box-sizing:border-box"></div>
<div style="position:absolute;left:166.4px;top:255.3px;width:138.49999999999997px;height:25.5px;border:1px solid #C4487F;border-radius:14px;box-sizing:border-box;background:#FDCADB"></div>
<div class="t" style="left:204.60px;top:262.52px;font-size:12.5px;color:#111;font-weight:700;transform:scaleX(0.8847);transform-origin:0 0;">CADASTRO</div>
<div style="position:absolute;left:305.6px;top:255.3px;width:139.29999999999995px;height:25.5px;border:1px solid #C4487F;border-radius:14px;box-sizing:border-box;background:#FDCADB"></div>
<div class="t" style="left:344.70px;top:262.52px;font-size:12.5px;color:#111;font-weight:700;transform:scaleX(0.8777);transform-origin:0 0;">CONTROLE</div>
<div style="position:absolute;left:445.3px;top:255.3px;width:139.2px;height:25.5px;border:1px solid #C4487F;border-radius:14px;box-sizing:border-box;background:#FDCADB"></div>
<div class="t" style="left:490.00px;top:262.52px;font-size:12.5px;color:#111;font-weight:700;transform:scaleX(0.9127);transform-origin:0 0;">AGENDA</div>
<div style="position:absolute;left:586.9px;top:255.3px;width:139.30000000000007px;height:25.5px;background:#F4399A;border-radius:14px"></div>
<div class="t" style="left:620.60px;top:262.52px;font-size:12.5px;color:#fff;font-weight:700;transform:scaleX(0.8877);transform-origin:0 0;">RELATÓRIOS</div>
<div style="position:absolute;left:726.3px;top:255.3px;width:138.30000000000007px;height:25.5px;border:1px solid #C4487F;border-radius:14px;box-sizing:border-box;background:#FDCADB"></div>
<div class="t" style="left:755.00px;top:262.52px;font-size:12.5px;color:#111;font-weight:700;transform:scaleX(0.8926);transform-origin:0 0;">DASHBOARDS</div>
<div style="position:absolute;left:866.2px;top:255.3px;width:139.39999999999998px;height:25.5px;border:1px solid #C4487F;border-radius:14px;box-sizing:border-box;background:#FDCADB"></div>
<div class="t" style="left:900.00px;top:262.52px;font-size:12.5px;color:#111;font-weight:700;transform:scaleX(0.8805);transform-origin:0 0;">INSTRUÇÕES</div>
<div style="position:absolute;left:194.7px;top:295.3px;width:138.7px;height:25.899999999999977px;background:#F4399A;border-radius:14px"></div>
<div class="t" style="left:249.00px;top:303.12px;font-size:12.5px;color:#fff;font-weight:700;transform:scaleX(0.9500);transform-origin:0 0;">Geral</div>
<div style="position:absolute;left:342.8px;top:295.3px;width:139.5px;height:25.899999999999977px;border:1px solid #C4487F;border-radius:14px;box-sizing:border-box;background:#FDCADB"></div>
<div class="t" style="left:372.80px;top:303.12px;font-size:12.5px;color:#111;font-weight:700;transform:scaleX(0.9619);transform-origin:0 0;">Procedimento</div>
<div style="position:absolute;left:490.6px;top:295.3px;width:139.19999999999993px;height:25.899999999999977px;border:1px solid #C4487F;border-radius:14px;box-sizing:border-box;background:#FDCADB"></div>
<div class="t" style="left:527.50px;top:303.12px;font-size:12.5px;color:#111;font-weight:700;transform:scaleX(0.9161);transform-origin:0 0;">Profissional</div>
<svg style="position:absolute;left:25px;top:240px" width="105" height="105" viewBox="0 0 900 900">
<g stroke="#111" stroke-width="20" stroke-linejoin="round" stroke-linecap="round">
<path d="M55,880 V525 Q55,450 115,445 H225 Q275,455 275,525 V880 Z" fill="#FCDCCB" stroke="none"/>
<path d="M55,870 V525 Q55,455 105,448 M240,450 Q275,470 275,525 V870" fill="none"/>
<path d="M280,880 V430 Q280,362 325,355 H460 Q505,365 505,430 V880 Z" fill="#FCDCCB" stroke="none"/>
<path d="M280,870 V430 Q280,370 322,358 M462,362 Q505,380 505,430 V870" fill="none"/>
<path d="M505,880 V560 Q505,495 550,488 H690 Q740,500 740,560 V880 Z" fill="#FCDCCB" stroke="none"/>
<path d="M505,870 V560 Q505,500 548,490 M692,492 Q740,510 740,560 V720 M740,770 V870" fill="none"/>
<path d="M100,395 H240 V570 Q240,640 170,640 Q100,640 100,570 Z" fill="#F45CB3"/>
<path d="M325,300 H460 V478 Q460,545 392,545 Q325,545 325,478 Z" fill="#F45CB3"/>
<path d="M550,450 H690 V622 Q690,690 620,690 Q550,690 550,622 Z" fill="#F45CB3"/>
<path d="M105,700 Q170,716 235,700 M330,605 Q395,621 460,605 M555,760 Q620,776 685,760" fill="none"/>
<g transform="translate(445,368) rotate(-37.6)">
<path d="M8,-24 Q70,-30 138,-26 V26 Q70,30 8,24 Q-14,0 8,-24 Z" fill="#F27BC0"/>
<rect x="138" y="-28" width="84" height="56" fill="#F6D47C"/>
<rect x="222" y="-50" width="70" height="100" fill="#fff"/>
<path d="M292,-62 H432 A62,62 0 0 1 432,62 H292 Z" fill="#3F6D8F"/>
</g>
</g></svg>
<div style="position:absolute;left:28px;top:330px;width:200px;height:1px;background:#a89ca0;opacity:0.8"></div>
<div style="position:absolute;left:55px;top:350.9px;width:170.6px;height:73.2px;background:#D9D9D9"></div>
<div class="t" style="left:97.10px;top:371.94px;font-size:12px;color:#3f3f3f;font-weight:700;transform:scaleX(1.0363);transform-origin:0 0;">Quantidade de</div>
<div class="t" style="left:99.65px;top:390.94px;font-size:12px;color:#3f3f3f;font-weight:700;transform:scaleX(1.0468);transform-origin:0 0;">atendimentos</div>
<div style="position:absolute;left:228.3px;top:350.9px;width:78.22999999999999px;height:35.200000000000045px;background:#D9D9D9"></div>
<div class="t" style="left:239.50px;top:363.94px;font-size:12px;color:#3f3f3f;font-weight:700;transform:scaleX(0.9900);transform-origin:0 0;">Janeiro</div>
<div style="position:absolute;left:309.13px;top:350.9px;width:78.22999999999999px;height:35.200000000000045px;background:#D9D9D9"></div>
<div class="t" style="left:320.33px;top:363.94px;font-size:12px;color:#3f3f3f;font-weight:700;transform:scaleX(1.0389);transform-origin:0 0;">Fevereiro</div>
<div style="position:absolute;left:389.96px;top:350.9px;width:78.23000000000005px;height:35.200000000000045px;background:#D9D9D9"></div>
<div class="t" style="left:401.16px;top:363.94px;font-size:12px;color:#3f3f3f;font-weight:700;transform:scaleX(1.0205);transform-origin:0 0;">Março</div>
<div style="position:absolute;left:470.79px;top:350.9px;width:78.22999999999993px;height:35.200000000000045px;background:#D9D9D9"></div>
<div class="t" style="left:481.99px;top:363.94px;font-size:12px;color:#3f3f3f;font-weight:700;transform:scaleX(0.9790);transform-origin:0 0;">Abril</div>
<div style="position:absolute;left:551.6199999999999px;top:350.9px;width:78.23000000000005px;height:35.200000000000045px;background:#D9D9D9"></div>
<div class="t" style="left:562.82px;top:363.94px;font-size:12px;color:#3f3f3f;font-weight:700;transform:scaleX(1.0484);transform-origin:0 0;">Maio</div>
<div style="position:absolute;left:632.4499999999999px;top:350.9px;width:78.23000000000005px;height:35.200000000000045px;background:#D9D9D9"></div>
<div class="t" style="left:643.65px;top:363.94px;font-size:12px;color:#3f3f3f;font-weight:700;transform:scaleX(0.9611);transform-origin:0 0;">Junho</div>
<div style="position:absolute;left:713.28px;top:350.9px;width:78.22999999999993px;height:35.200000000000045px;background:#D9D9D9"></div>
<div class="t" style="left:724.48px;top:363.94px;font-size:12px;color:#3f3f3f;font-weight:700;transform:scaleX(0.9688);transform-origin:0 0;">Julho</div>
<div style="position:absolute;left:794.1099999999999px;top:350.9px;width:78.23000000000005px;height:35.200000000000045px;background:#D9D9D9"></div>
<div class="t" style="left:805.31px;top:363.94px;font-size:12px;color:#3f3f3f;font-weight:700;transform:scaleX(0.9692);transform-origin:0 0;">Agosto</div>
<div style="position:absolute;left:874.9399999999999px;top:350.9px;width:78.23000000000005px;height:35.200000000000045px;background:#D9D9D9"></div>
<div class="t" style="left:886.14px;top:363.94px;font-size:12px;color:#3f3f3f;font-weight:700;transform:scaleX(1.0456);transform-origin:0 0;">Setembro</div>
<div style="position:absolute;left:955.77px;top:350.9px;width:78.22999999999993px;height:35.200000000000045px;background:#D9D9D9"></div>
<div class="t" style="left:966.97px;top:363.94px;font-size:12px;color:#3f3f3f;font-weight:700;transform:scaleX(1.0449);transform-origin:0 0;">Outubro</div>
<div style="position:absolute;left:1036.6px;top:350.9px;width:78.23000000000016px;height:35.200000000000045px;background:#D9D9D9"></div>
<div class="t" style="left:1047.80px;top:363.94px;font-size:12px;color:#3f3f3f;font-weight:700;transform:scaleX(1.0509);transform-origin:0 0;">Novembro</div>
<div style="position:absolute;left:1117.43px;top:350.9px;width:78.22999999999993px;height:35.200000000000045px;background:#D9D9D9"></div>
<div class="t" style="left:1128.63px;top:363.94px;font-size:12px;color:#3f3f3f;font-weight:700;transform:scaleX(1.0603);transform-origin:0 0;">Dezembro</div>
<div style="position:absolute;left:1198.26px;top:350.9px;width:78.22999999999993px;height:35.200000000000045px;background:#D9D9D9"></div>
<div class="t" style="left:1209.46px;top:363.94px;font-size:12px;color:#3f3f3f;font-weight:700;transform:scaleX(1.0306);transform-origin:0 0;">Total</div>
<div style="position:absolute;left:228.3px;top:386.1px;width:968.1600000000001px;height:37.799999999999955px;background:#F2F2F2"></div>
<div style="position:absolute;left:228.3px;top:423.4px;width:968.6600000000001px;height:1.1px;background:#cfcfcf"></div>
<div style="position:absolute;left:307.22999999999996px;top:386.1px;width:1.3px;height:37.799999999999955px;background:#cfcfcf"></div>
<svg style="position:absolute;left:228.3px;top:385.3px;" width="5" height="5" viewBox="0 0 5 5" fill="none"><path d="M0 0H5L0 5Z" fill="#0b6b22"/></svg>
<div class="t" style="left:239.50px;top:399.93px;font-size:12.6px;color:#262626;font-weight:400;">9</div>
<div style="position:absolute;left:388.05999999999995px;top:386.1px;width:1.3px;height:37.799999999999955px;background:#cfcfcf"></div>
<svg style="position:absolute;left:308.53px;top:385.3px;" width="5" height="5" viewBox="0 0 5 5" fill="none"><path d="M0 0H5L0 5Z" fill="#0b6b22"/></svg>
<div class="t" style="left:320.33px;top:399.93px;font-size:12.6px;color:#262626;font-weight:400;">7</div>
<div style="position:absolute;left:468.89px;top:386.1px;width:1.3px;height:37.799999999999955px;background:#cfcfcf"></div>
<svg style="position:absolute;left:389.35999999999996px;top:385.3px;" width="5" height="5" viewBox="0 0 5 5" fill="none"><path d="M0 0H5L0 5Z" fill="#0b6b22"/></svg>
<div class="t" style="left:401.16px;top:399.93px;font-size:12.6px;color:#262626;font-weight:400;">6</div>
<div style="position:absolute;left:549.7199999999999px;top:386.1px;width:1.3px;height:37.799999999999955px;background:#cfcfcf"></div>
<svg style="position:absolute;left:470.19px;top:385.3px;" width="5" height="5" viewBox="0 0 5 5" fill="none"><path d="M0 0H5L0 5Z" fill="#0b6b22"/></svg>
<div class="t" style="left:481.99px;top:399.93px;font-size:12.6px;color:#262626;font-weight:400;">6</div>
<div style="position:absolute;left:630.55px;top:386.1px;width:1.3px;height:37.799999999999955px;background:#cfcfcf"></div>
<svg style="position:absolute;left:551.02px;top:385.3px;" width="5" height="5" viewBox="0 0 5 5" fill="none"><path d="M0 0H5L0 5Z" fill="#0b6b22"/></svg>
<div class="t" style="left:562.82px;top:399.93px;font-size:12.6px;color:#262626;font-weight:400;">0</div>
<div style="position:absolute;left:711.38px;top:386.1px;width:1.3px;height:37.799999999999955px;background:#cfcfcf"></div>
<svg style="position:absolute;left:631.85px;top:385.3px;" width="5" height="5" viewBox="0 0 5 5" fill="none"><path d="M0 0H5L0 5Z" fill="#0b6b22"/></svg>
<div class="t" style="left:643.65px;top:399.93px;font-size:12.6px;color:#262626;font-weight:400;">0</div>
<div style="position:absolute;left:792.2099999999999px;top:386.1px;width:1.3px;height:37.799999999999955px;background:#cfcfcf"></div>
<svg style="position:absolute;left:712.6800000000001px;top:385.3px;" width="5" height="5" viewBox="0 0 5 5" fill="none"><path d="M0 0H5L0 5Z" fill="#0b6b22"/></svg>
<div class="t" style="left:724.48px;top:399.93px;font-size:12.6px;color:#262626;font-weight:400;">0</div>
<div style="position:absolute;left:873.04px;top:386.1px;width:1.3px;height:37.799999999999955px;background:#cfcfcf"></div>
<svg style="position:absolute;left:793.51px;top:385.3px;" width="5" height="5" viewBox="0 0 5 5" fill="none"><path d="M0 0H5L0 5Z" fill="#0b6b22"/></svg>
<div class="t" style="left:805.31px;top:399.93px;font-size:12.6px;color:#262626;font-weight:400;">0</div>
<div style="position:absolute;left:953.87px;top:386.1px;width:1.3px;height:37.799999999999955px;background:#cfcfcf"></div>
<svg style="position:absolute;left:874.34px;top:385.3px;" width="5" height="5" viewBox="0 0 5 5" fill="none"><path d="M0 0H5L0 5Z" fill="#0b6b22"/></svg>
<div class="t" style="left:886.14px;top:399.93px;font-size:12.6px;color:#262626;font-weight:400;">0</div>
<div style="position:absolute;left:1034.7px;top:386.1px;width:1.3px;height:37.799999999999955px;background:#cfcfcf"></div>
<svg style="position:absolute;left:955.1700000000001px;top:385.3px;" width="5" height="5" viewBox="0 0 5 5" fill="none"><path d="M0 0H5L0 5Z" fill="#0b6b22"/></svg>
<div class="t" style="left:966.97px;top:399.93px;font-size:12.6px;color:#262626;font-weight:400;">0</div>
<div style="position:absolute;left:1115.5300000000002px;top:386.1px;width:1.3px;height:37.799999999999955px;background:#cfcfcf"></div>
<svg style="position:absolute;left:1036.0px;top:385.3px;" width="5" height="5" viewBox="0 0 5 5" fill="none"><path d="M0 0H5L0 5Z" fill="#0b6b22"/></svg>
<div class="t" style="left:1047.80px;top:399.93px;font-size:12.6px;color:#262626;font-weight:400;">0</div>
<div style="position:absolute;left:1196.3600000000001px;top:386.1px;width:1.3px;height:37.799999999999955px;background:#cfcfcf"></div>
<svg style="position:absolute;left:1116.8300000000002px;top:385.3px;" width="5" height="5" viewBox="0 0 5 5" fill="none"><path d="M0 0H5L0 5Z" fill="#0b6b22"/></svg>
<div class="t" style="left:1128.63px;top:399.93px;font-size:12.6px;color:#262626;font-weight:400;">0</div>
<div style="position:absolute;left:1197.46px;top:386.90000000000003px;width:80.82999999999993px;height:36.99999999999996px;background:#808080"></div>
<div class="t" style="left:1209.76px;top:399.93px;font-size:12.6px;color:#fff;font-weight:400;">28</div>
<div style="position:absolute;left:55px;top:437.5px;width:170.8px;height:35px;background:#D9D9D9"></div>
<div class="t" style="left:66.30px;top:451.04px;font-size:12px;color:#3f3f3f;font-weight:700;transform:scaleX(1.0290);transform-origin:0 0;">Top 5 procedimentos</div>
<div style="position:absolute;left:55px;top:475.7px;width:170.8px;height:43.400000000000034px;background:#D9D9D9"></div>
<svg style="position:absolute;left:55px;top:475.4px;" width="3.6" height="3.6" viewBox="0 0 3.6 3.6" fill="none"><path d="M0 0H3.6L0 3.6Z" fill="#0b6b22"/></svg>
<div class="t" style="left:66.30px;top:493.69px;font-size:12px;color:#3f3f3f;font-weight:700;">Pedicure Tradicional</div>
<div style="position:absolute;left:55px;top:521.8px;width:170.8px;height:43.000000000000114px;background:#D9D9D9"></div>
<svg style="position:absolute;left:55px;top:521.5px;" width="3.6" height="3.6" viewBox="0 0 3.6 3.6" fill="none"><path d="M0 0H3.6L0 3.6Z" fill="#0b6b22"/></svg>
<div class="t" style="left:66.30px;top:528.99px;font-size:12px;color:#3f3f3f;font-weight:700;">Pedicure com Esmaltação</div>
<div class="t" style="left:66.30px;top:548.09px;font-size:12px;color:#3f3f3f;font-weight:700;transform:scaleX(1.0500);transform-origin:0 0;">em Gel</div>
<div style="position:absolute;left:55px;top:567.5px;width:170.8px;height:43.30000000000007px;background:#D9D9D9"></div>
<svg style="position:absolute;left:55px;top:567.2px;" width="3.6" height="3.6" viewBox="0 0 3.6 3.6" fill="none"><path d="M0 0H3.6L0 3.6Z" fill="#0b6b22"/></svg>
<div class="t" style="left:66.30px;top:574.84px;font-size:12px;color:#3f3f3f;font-weight:700;transform:scaleX(1.0149);transform-origin:0 0;">Manicure com Esmaltação</div>
<div class="t" style="left:66.30px;top:593.94px;font-size:12px;color:#3f3f3f;font-weight:700;transform:scaleX(1.0500);transform-origin:0 0;">em Gel</div>
<div style="position:absolute;left:55px;top:613.5px;width:170.8px;height:42.89999999999998px;background:#D9D9D9"></div>
<svg style="position:absolute;left:55px;top:613.2px;" width="3.6" height="3.6" viewBox="0 0 3.6 3.6" fill="none"><path d="M0 0H3.6L0 3.6Z" fill="#0b6b22"/></svg>
<div class="t" style="left:66.30px;top:631.24px;font-size:12px;color:#3f3f3f;font-weight:700;transform:scaleX(0.9667);transform-origin:0 0;">Spa dos Pés</div>
<div style="position:absolute;left:55px;top:659.0999999999999px;width:170.8px;height:44.700000000000045px;background:#D9D9D9"></div>
<svg style="position:absolute;left:55px;top:658.8px;" width="3.6" height="3.6" viewBox="0 0 3.6 3.6" fill="none"><path d="M0 0H3.6L0 3.6Z" fill="#0b6b22"/></svg>
<div class="t" style="left:66.30px;top:676.89px;font-size:12px;color:#3f3f3f;font-weight:700;transform:scaleX(1.0253);transform-origin:0 0;">Manicure Tradicional</div>
<div style="position:absolute;left:228.3px;top:437.5px;width:78.22999999999999px;height:36.69999999999999px;background:#D9D9D9"></div>
<div class="t" style="left:239.50px;top:451.29px;font-size:12px;color:#3f3f3f;font-weight:700;transform:scaleX(0.9900);transform-origin:0 0;">Janeiro</div>
<div style="position:absolute;left:309.13px;top:437.5px;width:78.22999999999999px;height:36.69999999999999px;background:#D9D9D9"></div>
<div class="t" style="left:320.33px;top:451.29px;font-size:12px;color:#3f3f3f;font-weight:700;transform:scaleX(1.0389);transform-origin:0 0;">Fevereiro</div>
<div style="position:absolute;left:389.96px;top:437.5px;width:78.23000000000005px;height:36.69999999999999px;background:#D9D9D9"></div>
<div class="t" style="left:401.16px;top:451.29px;font-size:12px;color:#3f3f3f;font-weight:700;transform:scaleX(1.0205);transform-origin:0 0;">Março</div>
<div style="position:absolute;left:470.79px;top:437.5px;width:78.22999999999993px;height:36.69999999999999px;background:#D9D9D9"></div>
<div class="t" style="left:481.99px;top:451.29px;font-size:12px;color:#3f3f3f;font-weight:700;transform:scaleX(0.9790);transform-origin:0 0;">Abril</div>
<div style="position:absolute;left:551.6199999999999px;top:437.5px;width:78.23000000000005px;height:36.69999999999999px;background:#D9D9D9"></div>
<div class="t" style="left:562.82px;top:451.29px;font-size:12px;color:#3f3f3f;font-weight:700;transform:scaleX(1.0484);transform-origin:0 0;">Maio</div>
<div style="position:absolute;left:632.4499999999999px;top:437.5px;width:78.23000000000005px;height:36.69999999999999px;background:#D9D9D9"></div>
<div class="t" style="left:643.65px;top:451.29px;font-size:12px;color:#3f3f3f;font-weight:700;transform:scaleX(0.9611);transform-origin:0 0;">Junho</div>
<div style="position:absolute;left:713.28px;top:437.5px;width:78.22999999999993px;height:36.69999999999999px;background:#D9D9D9"></div>
<div class="t" style="left:724.48px;top:451.29px;font-size:12px;color:#3f3f3f;font-weight:700;transform:scaleX(0.9688);transform-origin:0 0;">Julho</div>
<div style="position:absolute;left:794.1099999999999px;top:437.5px;width:78.23000000000005px;height:36.69999999999999px;background:#D9D9D9"></div>
<div class="t" style="left:805.31px;top:451.29px;font-size:12px;color:#3f3f3f;font-weight:700;transform:scaleX(0.9692);transform-origin:0 0;">Agosto</div>
<div style="position:absolute;left:874.9399999999999px;top:437.5px;width:78.23000000000005px;height:36.69999999999999px;background:#D9D9D9"></div>
<div class="t" style="left:886.14px;top:451.29px;font-size:12px;color:#3f3f3f;font-weight:700;transform:scaleX(1.0456);transform-origin:0 0;">Setembro</div>
<div style="position:absolute;left:955.77px;top:437.5px;width:78.22999999999993px;height:36.69999999999999px;background:#D9D9D9"></div>
<div class="t" style="left:966.97px;top:451.29px;font-size:12px;color:#3f3f3f;font-weight:700;transform:scaleX(1.0449);transform-origin:0 0;">Outubro</div>
<div style="position:absolute;left:1036.6px;top:437.5px;width:78.23000000000016px;height:36.69999999999999px;background:#D9D9D9"></div>
<div class="t" style="left:1047.80px;top:451.29px;font-size:12px;color:#3f3f3f;font-weight:700;transform:scaleX(1.0509);transform-origin:0 0;">Novembro</div>
<div style="position:absolute;left:1117.43px;top:437.5px;width:78.22999999999993px;height:36.69999999999999px;background:#D9D9D9"></div>
<div class="t" style="left:1128.63px;top:451.29px;font-size:12px;color:#3f3f3f;font-weight:700;transform:scaleX(1.0603);transform-origin:0 0;">Dezembro</div>
<div style="position:absolute;left:1198.26px;top:437.5px;width:78.22999999999993px;height:36.69999999999999px;background:#D9D9D9"></div>
<div class="t" style="left:1209.46px;top:451.29px;font-size:12px;color:#3f3f3f;font-weight:700;transform:scaleX(1.0306);transform-origin:0 0;">Total</div>
<div style="position:absolute;left:228.3px;top:474.2px;width:968.1600000000001px;height:46.30000000000001px;background:#F2F2F2"></div>
<div style="position:absolute;left:228.3px;top:520.0px;width:968.6600000000001px;height:1.1px;background:#cfcfcf"></div>
<div style="position:absolute;left:307.22999999999996px;top:474.2px;width:1.3px;height:46.30000000000001px;background:#cfcfcf"></div>
<svg style="position:absolute;left:228.3px;top:473.4px;" width="5" height="5" viewBox="0 0 5 5" fill="none"><path d="M0 0H5L0 5Z" fill="#0b6b22"/></svg>
<div class="t" style="left:239.50px;top:492.08px;font-size:12.6px;color:#262626;font-weight:400;">2</div>
<div style="position:absolute;left:388.05999999999995px;top:474.2px;width:1.3px;height:46.30000000000001px;background:#cfcfcf"></div>
<svg style="position:absolute;left:308.53px;top:473.4px;" width="5" height="5" viewBox="0 0 5 5" fill="none"><path d="M0 0H5L0 5Z" fill="#0b6b22"/></svg>
<div class="t" style="left:320.33px;top:492.08px;font-size:12.6px;color:#262626;font-weight:400;">2</div>
<div style="position:absolute;left:468.89px;top:474.2px;width:1.3px;height:46.30000000000001px;background:#cfcfcf"></div>
<svg style="position:absolute;left:389.35999999999996px;top:473.4px;" width="5" height="5" viewBox="0 0 5 5" fill="none"><path d="M0 0H5L0 5Z" fill="#0b6b22"/></svg>
<div class="t" style="left:401.16px;top:492.08px;font-size:12.6px;color:#262626;font-weight:400;">3</div>
<div style="position:absolute;left:549.7199999999999px;top:474.2px;width:1.3px;height:46.30000000000001px;background:#cfcfcf"></div>
<svg style="position:absolute;left:470.19px;top:473.4px;" width="5" height="5" viewBox="0 0 5 5" fill="none"><path d="M0 0H5L0 5Z" fill="#0b6b22"/></svg>
<div class="t" style="left:481.99px;top:492.08px;font-size:12.6px;color:#262626;font-weight:400;">1</div>
<div style="position:absolute;left:630.55px;top:474.2px;width:1.3px;height:46.30000000000001px;background:#cfcfcf"></div>
<svg style="position:absolute;left:551.02px;top:473.4px;" width="5" height="5" viewBox="0 0 5 5" fill="none"><path d="M0 0H5L0 5Z" fill="#0b6b22"/></svg>
<div class="t" style="left:562.82px;top:492.08px;font-size:12.6px;color:#262626;font-weight:400;">0</div>
<div style="position:absolute;left:711.38px;top:474.2px;width:1.3px;height:46.30000000000001px;background:#cfcfcf"></div>
<svg style="position:absolute;left:631.85px;top:473.4px;" width="5" height="5" viewBox="0 0 5 5" fill="none"><path d="M0 0H5L0 5Z" fill="#0b6b22"/></svg>
<div class="t" style="left:643.65px;top:492.08px;font-size:12.6px;color:#262626;font-weight:400;">0</div>
<div style="position:absolute;left:792.2099999999999px;top:474.2px;width:1.3px;height:46.30000000000001px;background:#cfcfcf"></div>
<svg style="position:absolute;left:712.6800000000001px;top:473.4px;" width="5" height="5" viewBox="0 0 5 5" fill="none"><path d="M0 0H5L0 5Z" fill="#0b6b22"/></svg>
<div class="t" style="left:724.48px;top:492.08px;font-size:12.6px;color:#262626;font-weight:400;">0</div>
<div style="position:absolute;left:873.04px;top:474.2px;width:1.3px;height:46.30000000000001px;background:#cfcfcf"></div>
<svg style="position:absolute;left:793.51px;top:473.4px;" width="5" height="5" viewBox="0 0 5 5" fill="none"><path d="M0 0H5L0 5Z" fill="#0b6b22"/></svg>
<div class="t" style="left:805.31px;top:492.08px;font-size:12.6px;color:#262626;font-weight:400;">0</div>
<div style="position:absolute;left:953.87px;top:474.2px;width:1.3px;height:46.30000000000001px;background:#cfcfcf"></div>
<svg style="position:absolute;left:874.34px;top:473.4px;" width="5" height="5" viewBox="0 0 5 5" fill="none"><path d="M0 0H5L0 5Z" fill="#0b6b22"/></svg>
<div class="t" style="left:886.14px;top:492.08px;font-size:12.6px;color:#262626;font-weight:400;">0</div>
<div style="position:absolute;left:1034.7px;top:474.2px;width:1.3px;height:46.30000000000001px;background:#cfcfcf"></div>
<svg style="position:absolute;left:955.1700000000001px;top:473.4px;" width="5" height="5" viewBox="0 0 5 5" fill="none"><path d="M0 0H5L0 5Z" fill="#0b6b22"/></svg>
<div class="t" style="left:966.97px;top:492.08px;font-size:12.6px;color:#262626;font-weight:400;">0</div>
<div style="position:absolute;left:1115.5300000000002px;top:474.2px;width:1.3px;height:46.30000000000001px;background:#cfcfcf"></div>
<svg style="position:absolute;left:1036.0px;top:473.4px;" width="5" height="5" viewBox="0 0 5 5" fill="none"><path d="M0 0H5L0 5Z" fill="#0b6b22"/></svg>
<div class="t" style="left:1047.80px;top:492.08px;font-size:12.6px;color:#262626;font-weight:400;">0</div>
<div style="position:absolute;left:1196.3600000000001px;top:474.2px;width:1.3px;height:46.30000000000001px;background:#cfcfcf"></div>
<svg style="position:absolute;left:1116.8300000000002px;top:473.4px;" width="5" height="5" viewBox="0 0 5 5" fill="none"><path d="M0 0H5L0 5Z" fill="#0b6b22"/></svg>
<div class="t" style="left:1128.63px;top:492.08px;font-size:12.6px;color:#262626;font-weight:400;">0</div>
<div style="position:absolute;left:1197.46px;top:475.0px;width:80.82999999999993px;height:45.500000000000014px;background:#808080"></div>
<div class="t" style="left:1209.76px;top:492.08px;font-size:12.6px;color:#fff;font-weight:400;">8</div>
<div style="position:absolute;left:228.3px;top:520.5px;width:968.1600000000001px;height:45.700000000000045px;background:#F2F2F2"></div>
<div style="position:absolute;left:228.3px;top:565.7px;width:968.6600000000001px;height:1.1px;background:#cfcfcf"></div>
<div style="position:absolute;left:307.22999999999996px;top:520.5px;width:1.3px;height:45.700000000000045px;background:#cfcfcf"></div>
<svg style="position:absolute;left:228.3px;top:519.7px;" width="5" height="5" viewBox="0 0 5 5" fill="none"><path d="M0 0H5L0 5Z" fill="#0b6b22"/></svg>
<div class="t" style="left:239.50px;top:537.98px;font-size:12.6px;color:#262626;font-weight:400;">4</div>
<div style="position:absolute;left:388.05999999999995px;top:520.5px;width:1.3px;height:45.700000000000045px;background:#cfcfcf"></div>
<svg style="position:absolute;left:308.53px;top:519.7px;" width="5" height="5" viewBox="0 0 5 5" fill="none"><path d="M0 0H5L0 5Z" fill="#0b6b22"/></svg>
<div class="t" style="left:320.33px;top:537.98px;font-size:12.6px;color:#262626;font-weight:400;">2</div>
<div style="position:absolute;left:468.89px;top:520.5px;width:1.3px;height:45.700000000000045px;background:#cfcfcf"></div>
<svg style="position:absolute;left:389.35999999999996px;top:519.7px;" width="5" height="5" viewBox="0 0 5 5" fill="none"><path d="M0 0H5L0 5Z" fill="#0b6b22"/></svg>
<div class="t" style="left:401.16px;top:537.98px;font-size:12.6px;color:#262626;font-weight:400;">1</div>
<div style="position:absolute;left:549.7199999999999px;top:520.5px;width:1.3px;height:45.700000000000045px;background:#cfcfcf"></div>
<svg style="position:absolute;left:470.19px;top:519.7px;" width="5" height="5" viewBox="0 0 5 5" fill="none"><path d="M0 0H5L0 5Z" fill="#0b6b22"/></svg>
<div class="t" style="left:481.99px;top:537.98px;font-size:12.6px;color:#262626;font-weight:400;">1</div>
<div style="position:absolute;left:630.55px;top:520.5px;width:1.3px;height:45.700000000000045px;background:#cfcfcf"></div>
<svg style="position:absolute;left:551.02px;top:519.7px;" width="5" height="5" viewBox="0 0 5 5" fill="none"><path d="M0 0H5L0 5Z" fill="#0b6b22"/></svg>
<div class="t" style="left:562.82px;top:537.98px;font-size:12.6px;color:#262626;font-weight:400;">0</div>
<div style="position:absolute;left:711.38px;top:520.5px;width:1.3px;height:45.700000000000045px;background:#cfcfcf"></div>
<svg style="position:absolute;left:631.85px;top:519.7px;" width="5" height="5" viewBox="0 0 5 5" fill="none"><path d="M0 0H5L0 5Z" fill="#0b6b22"/></svg>
<div class="t" style="left:643.65px;top:537.98px;font-size:12.6px;color:#262626;font-weight:400;">0</div>
<div style="position:absolute;left:792.2099999999999px;top:520.5px;width:1.3px;height:45.700000000000045px;background:#cfcfcf"></div>
<svg style="position:absolute;left:712.6800000000001px;top:519.7px;" width="5" height="5" viewBox="0 0 5 5" fill="none"><path d="M0 0H5L0 5Z" fill="#0b6b22"/></svg>
<div class="t" style="left:724.48px;top:537.98px;font-size:12.6px;color:#262626;font-weight:400;">0</div>
<div style="position:absolute;left:873.04px;top:520.5px;width:1.3px;height:45.700000000000045px;background:#cfcfcf"></div>
<svg style="position:absolute;left:793.51px;top:519.7px;" width="5" height="5" viewBox="0 0 5 5" fill="none"><path d="M0 0H5L0 5Z" fill="#0b6b22"/></svg>
<div class="t" style="left:805.31px;top:537.98px;font-size:12.6px;color:#262626;font-weight:400;">0</div>
<div style="position:absolute;left:953.87px;top:520.5px;width:1.3px;height:45.700000000000045px;background:#cfcfcf"></div>
<svg style="position:absolute;left:874.34px;top:519.7px;" width="5" height="5" viewBox="0 0 5 5" fill="none"><path d="M0 0H5L0 5Z" fill="#0b6b22"/></svg>
<div class="t" style="left:886.14px;top:537.98px;font-size:12.6px;color:#262626;font-weight:400;">0</div>
<div style="position:absolute;left:1034.7px;top:520.5px;width:1.3px;height:45.700000000000045px;background:#cfcfcf"></div>
<svg style="position:absolute;left:955.1700000000001px;top:519.7px;" width="5" height="5" viewBox="0 0 5 5" fill="none"><path d="M0 0H5L0 5Z" fill="#0b6b22"/></svg>
<div class="t" style="left:966.97px;top:537.98px;font-size:12.6px;color:#262626;font-weight:400;">0</div>
<div style="position:absolute;left:1115.5300000000002px;top:520.5px;width:1.3px;height:45.700000000000045px;background:#cfcfcf"></div>
<svg style="position:absolute;left:1036.0px;top:519.7px;" width="5" height="5" viewBox="0 0 5 5" fill="none"><path d="M0 0H5L0 5Z" fill="#0b6b22"/></svg>
<div class="t" style="left:1047.80px;top:537.98px;font-size:12.6px;color:#262626;font-weight:400;">0</div>
<div style="position:absolute;left:1196.3600000000001px;top:520.5px;width:1.3px;height:45.700000000000045px;background:#cfcfcf"></div>
<svg style="position:absolute;left:1116.8300000000002px;top:519.7px;" width="5" height="5" viewBox="0 0 5 5" fill="none"><path d="M0 0H5L0 5Z" fill="#0b6b22"/></svg>
<div class="t" style="left:1128.63px;top:537.98px;font-size:12.6px;color:#262626;font-weight:400;">0</div>
<div style="position:absolute;left:1197.46px;top:521.3px;width:80.82999999999993px;height:44.90000000000005px;background:#808080"></div>
<div style="position:absolute;left:1197.46px;top:520.2px;width:80.82999999999993px;height:1.3px;background:#a3a3a3"></div>
<div class="t" style="left:1209.76px;top:537.98px;font-size:12.6px;color:#fff;font-weight:400;">8</div>
<div style="position:absolute;left:228.3px;top:566.2px;width:968.1600000000001px;height:46.0px;background:#F2F2F2"></div>
<div style="position:absolute;left:228.3px;top:611.7px;width:968.6600000000001px;height:1.1px;background:#cfcfcf"></div>
<div style="position:absolute;left:307.22999999999996px;top:566.2px;width:1.3px;height:46.0px;background:#cfcfcf"></div>
<svg style="position:absolute;left:228.3px;top:565.4000000000001px;" width="5" height="5" viewBox="0 0 5 5" fill="none"><path d="M0 0H5L0 5Z" fill="#0b6b22"/></svg>
<div class="t" style="left:239.50px;top:583.83px;font-size:12.6px;color:#262626;font-weight:400;">2</div>
<div style="position:absolute;left:388.05999999999995px;top:566.2px;width:1.3px;height:46.0px;background:#cfcfcf"></div>
<svg style="position:absolute;left:308.53px;top:565.4000000000001px;" width="5" height="5" viewBox="0 0 5 5" fill="none"><path d="M0 0H5L0 5Z" fill="#0b6b22"/></svg>
<div class="t" style="left:320.33px;top:583.83px;font-size:12.6px;color:#262626;font-weight:400;">1</div>
<div style="position:absolute;left:468.89px;top:566.2px;width:1.3px;height:46.0px;background:#cfcfcf"></div>
<svg style="position:absolute;left:389.35999999999996px;top:565.4000000000001px;" width="5" height="5" viewBox="0 0 5 5" fill="none"><path d="M0 0H5L0 5Z" fill="#0b6b22"/></svg>
<div class="t" style="left:401.16px;top:583.83px;font-size:12.6px;color:#262626;font-weight:400;">0</div>
<div style="position:absolute;left:549.7199999999999px;top:566.2px;width:1.3px;height:46.0px;background:#cfcfcf"></div>
<svg style="position:absolute;left:470.19px;top:565.4000000000001px;" width="5" height="5" viewBox="0 0 5 5" fill="none"><path d="M0 0H5L0 5Z" fill="#0b6b22"/></svg>
<div class="t" style="left:481.99px;top:583.83px;font-size:12.6px;color:#262626;font-weight:400;">1</div>
<div style="position:absolute;left:630.55px;top:566.2px;width:1.3px;height:46.0px;background:#cfcfcf"></div>
<svg style="position:absolute;left:551.02px;top:565.4000000000001px;" width="5" height="5" viewBox="0 0 5 5" fill="none"><path d="M0 0H5L0 5Z" fill="#0b6b22"/></svg>
<div class="t" style="left:562.82px;top:583.83px;font-size:12.6px;color:#262626;font-weight:400;">0</div>
<div style="position:absolute;left:711.38px;top:566.2px;width:1.3px;height:46.0px;background:#cfcfcf"></div>
<svg style="position:absolute;left:631.85px;top:565.4000000000001px;" width="5" height="5" viewBox="0 0 5 5" fill="none"><path d="M0 0H5L0 5Z" fill="#0b6b22"/></svg>
<div class="t" style="left:643.65px;top:583.83px;font-size:12.6px;color:#262626;font-weight:400;">0</div>
<div style="position:absolute;left:792.2099999999999px;top:566.2px;width:1.3px;height:46.0px;background:#cfcfcf"></div>
<svg style="position:absolute;left:712.6800000000001px;top:565.4000000000001px;" width="5" height="5" viewBox="0 0 5 5" fill="none"><path d="M0 0H5L0 5Z" fill="#0b6b22"/></svg>
<div class="t" style="left:724.48px;top:583.83px;font-size:12.6px;color:#262626;font-weight:400;">0</div>
<div style="position:absolute;left:873.04px;top:566.2px;width:1.3px;height:46.0px;background:#cfcfcf"></div>
<svg style="position:absolute;left:793.51px;top:565.4000000000001px;" width="5" height="5" viewBox="0 0 5 5" fill="none"><path d="M0 0H5L0 5Z" fill="#0b6b22"/></svg>
<div class="t" style="left:805.31px;top:583.83px;font-size:12.6px;color:#262626;font-weight:400;">0</div>
<div style="position:absolute;left:953.87px;top:566.2px;width:1.3px;height:46.0px;background:#cfcfcf"></div>
<svg style="position:absolute;left:874.34px;top:565.4000000000001px;" width="5" height="5" viewBox="0 0 5 5" fill="none"><path d="M0 0H5L0 5Z" fill="#0b6b22"/></svg>
<div class="t" style="left:886.14px;top:583.83px;font-size:12.6px;color:#262626;font-weight:400;">0</div>
<div style="position:absolute;left:1034.7px;top:566.2px;width:1.3px;height:46.0px;background:#cfcfcf"></div>
<svg style="position:absolute;left:955.1700000000001px;top:565.4000000000001px;" width="5" height="5" viewBox="0 0 5 5" fill="none"><path d="M0 0H5L0 5Z" fill="#0b6b22"/></svg>
<div class="t" style="left:966.97px;top:583.83px;font-size:12.6px;color:#262626;font-weight:400;">0</div>
<div style="position:absolute;left:1115.5300000000002px;top:566.2px;width:1.3px;height:46.0px;background:#cfcfcf"></div>
<svg style="position:absolute;left:1036.0px;top:565.4000000000001px;" width="5" height="5" viewBox="0 0 5 5" fill="none"><path d="M0 0H5L0 5Z" fill="#0b6b22"/></svg>
<div class="t" style="left:1047.80px;top:583.83px;font-size:12.6px;color:#262626;font-weight:400;">0</div>
<div style="position:absolute;left:1196.3600000000001px;top:566.2px;width:1.3px;height:46.0px;background:#cfcfcf"></div>
<svg style="position:absolute;left:1116.8300000000002px;top:565.4000000000001px;" width="5" height="5" viewBox="0 0 5 5" fill="none"><path d="M0 0H5L0 5Z" fill="#0b6b22"/></svg>
<div class="t" style="left:1128.63px;top:583.83px;font-size:12.6px;color:#262626;font-weight:400;">0</div>
<div style="position:absolute;left:1197.46px;top:567.0px;width:80.82999999999993px;height:45.2px;background:#808080"></div>
<div style="position:absolute;left:1197.46px;top:565.9000000000001px;width:80.82999999999993px;height:1.3px;background:#a3a3a3"></div>
<div class="t" style="left:1209.76px;top:583.83px;font-size:12.6px;color:#fff;font-weight:400;">4</div>
<div style="position:absolute;left:228.3px;top:612.2px;width:968.1600000000001px;height:45.59999999999991px;background:#F2F2F2"></div>
<div style="position:absolute;left:228.3px;top:657.3px;width:968.6600000000001px;height:1.1px;background:#cfcfcf"></div>
<div style="position:absolute;left:307.22999999999996px;top:612.2px;width:1.3px;height:45.59999999999991px;background:#cfcfcf"></div>
<svg style="position:absolute;left:228.3px;top:611.4000000000001px;" width="5" height="5" viewBox="0 0 5 5" fill="none"><path d="M0 0H5L0 5Z" fill="#0b6b22"/></svg>
<div class="t" style="left:239.50px;top:629.63px;font-size:12.6px;color:#262626;font-weight:400;">0</div>
<div style="position:absolute;left:388.05999999999995px;top:612.2px;width:1.3px;height:45.59999999999991px;background:#cfcfcf"></div>
<svg style="position:absolute;left:308.53px;top:611.4000000000001px;" width="5" height="5" viewBox="0 0 5 5" fill="none"><path d="M0 0H5L0 5Z" fill="#0b6b22"/></svg>
<div class="t" style="left:320.33px;top:629.63px;font-size:12.6px;color:#262626;font-weight:400;">1</div>
<div style="position:absolute;left:468.89px;top:612.2px;width:1.3px;height:45.59999999999991px;background:#cfcfcf"></div>
<svg style="position:absolute;left:389.35999999999996px;top:611.4000000000001px;" width="5" height="5" viewBox="0 0 5 5" fill="none"><path d="M0 0H5L0 5Z" fill="#0b6b22"/></svg>
<div class="t" style="left:401.16px;top:629.63px;font-size:12.6px;color:#262626;font-weight:400;">1</div>
<div style="position:absolute;left:549.7199999999999px;top:612.2px;width:1.3px;height:45.59999999999991px;background:#cfcfcf"></div>
<svg style="position:absolute;left:470.19px;top:611.4000000000001px;" width="5" height="5" viewBox="0 0 5 5" fill="none"><path d="M0 0H5L0 5Z" fill="#0b6b22"/></svg>
<div class="t" style="left:481.99px;top:629.63px;font-size:12.6px;color:#262626;font-weight:400;">2</div>
<div style="position:absolute;left:630.55px;top:612.2px;width:1.3px;height:45.59999999999991px;background:#cfcfcf"></div>
<svg style="position:absolute;left:551.02px;top:611.4000000000001px;" width="5" height="5" viewBox="0 0 5 5" fill="none"><path d="M0 0H5L0 5Z" fill="#0b6b22"/></svg>
<div class="t" style="left:562.82px;top:629.63px;font-size:12.6px;color:#262626;font-weight:400;">0</div>
<div style="position:absolute;left:711.38px;top:612.2px;width:1.3px;height:45.59999999999991px;background:#cfcfcf"></div>
<svg style="position:absolute;left:631.85px;top:611.4000000000001px;" width="5" height="5" viewBox="0 0 5 5" fill="none"><path d="M0 0H5L0 5Z" fill="#0b6b22"/></svg>
<div class="t" style="left:643.65px;top:629.63px;font-size:12.6px;color:#262626;font-weight:400;">0</div>
<div style="position:absolute;left:792.2099999999999px;top:612.2px;width:1.3px;height:45.59999999999991px;background:#cfcfcf"></div>
<svg style="position:absolute;left:712.6800000000001px;top:611.4000000000001px;" width="5" height="5" viewBox="0 0 5 5" fill="none"><path d="M0 0H5L0 5Z" fill="#0b6b22"/></svg>
<div class="t" style="left:724.48px;top:629.63px;font-size:12.6px;color:#262626;font-weight:400;">0</div>
<div style="position:absolute;left:873.04px;top:612.2px;width:1.3px;height:45.59999999999991px;background:#cfcfcf"></div>
<svg style="position:absolute;left:793.51px;top:611.4000000000001px;" width="5" height="5" viewBox="0 0 5 5" fill="none"><path d="M0 0H5L0 5Z" fill="#0b6b22"/></svg>
<div class="t" style="left:805.31px;top:629.63px;font-size:12.6px;color:#262626;font-weight:400;">0</div>
<div style="position:absolute;left:953.87px;top:612.2px;width:1.3px;height:45.59999999999991px;background:#cfcfcf"></div>
<svg style="position:absolute;left:874.34px;top:611.4000000000001px;" width="5" height="5" viewBox="0 0 5 5" fill="none"><path d="M0 0H5L0 5Z" fill="#0b6b22"/></svg>
<div class="t" style="left:886.14px;top:629.63px;font-size:12.6px;color:#262626;font-weight:400;">0</div>
<div style="position:absolute;left:1034.7px;top:612.2px;width:1.3px;height:45.59999999999991px;background:#cfcfcf"></div>
<svg style="position:absolute;left:955.1700000000001px;top:611.4000000000001px;" width="5" height="5" viewBox="0 0 5 5" fill="none"><path d="M0 0H5L0 5Z" fill="#0b6b22"/></svg>
<div class="t" style="left:966.97px;top:629.63px;font-size:12.6px;color:#262626;font-weight:400;">0</div>
<div style="position:absolute;left:1115.5300000000002px;top:612.2px;width:1.3px;height:45.59999999999991px;background:#cfcfcf"></div>
<svg style="position:absolute;left:1036.0px;top:611.4000000000001px;" width="5" height="5" viewBox="0 0 5 5" fill="none"><path d="M0 0H5L0 5Z" fill="#0b6b22"/></svg>
<div class="t" style="left:1047.80px;top:629.63px;font-size:12.6px;color:#262626;font-weight:400;">0</div>
<div style="position:absolute;left:1196.3600000000001px;top:612.2px;width:1.3px;height:45.59999999999991px;background:#cfcfcf"></div>
<svg style="position:absolute;left:1116.8300000000002px;top:611.4000000000001px;" width="5" height="5" viewBox="0 0 5 5" fill="none"><path d="M0 0H5L0 5Z" fill="#0b6b22"/></svg>
<div class="t" style="left:1128.63px;top:629.63px;font-size:12.6px;color:#262626;font-weight:400;">0</div>
<div style="position:absolute;left:1197.46px;top:613.0px;width:80.82999999999993px;height:44.79999999999991px;background:#808080"></div>
<div style="position:absolute;left:1197.46px;top:611.9000000000001px;width:80.82999999999993px;height:1.3px;background:#a3a3a3"></div>
<div class="t" style="left:1209.76px;top:629.63px;font-size:12.6px;color:#fff;font-weight:400;">4</div>
<div style="position:absolute;left:228.3px;top:657.8px;width:968.1600000000001px;height:45.700000000000045px;background:#F2F2F2"></div>
<div style="position:absolute;left:228.3px;top:703.0px;width:968.6600000000001px;height:1.1px;background:#cfcfcf"></div>
<div style="position:absolute;left:307.22999999999996px;top:657.8px;width:1.3px;height:45.700000000000045px;background:#cfcfcf"></div>
<svg style="position:absolute;left:228.3px;top:657.0px;" width="5" height="5" viewBox="0 0 5 5" fill="none"><path d="M0 0H5L0 5Z" fill="#0b6b22"/></svg>
<div class="t" style="left:239.50px;top:675.28px;font-size:12.6px;color:#262626;font-weight:400;">1</div>
<div style="position:absolute;left:388.05999999999995px;top:657.8px;width:1.3px;height:45.700000000000045px;background:#cfcfcf"></div>
<svg style="position:absolute;left:308.53px;top:657.0px;" width="5" height="5" viewBox="0 0 5 5" fill="none"><path d="M0 0H5L0 5Z" fill="#0b6b22"/></svg>
<div class="t" style="left:320.33px;top:675.28px;font-size:12.6px;color:#262626;font-weight:400;">1</div>
<div style="position:absolute;left:468.89px;top:657.8px;width:1.3px;height:45.700000000000045px;background:#cfcfcf"></div>
<svg style="position:absolute;left:389.35999999999996px;top:657.0px;" width="5" height="5" viewBox="0 0 5 5" fill="none"><path d="M0 0H5L0 5Z" fill="#0b6b22"/></svg>
<div class="t" style="left:401.16px;top:675.28px;font-size:12.6px;color:#262626;font-weight:400;">1</div>
<div style="position:absolute;left:549.7199999999999px;top:657.8px;width:1.3px;height:45.700000000000045px;background:#cfcfcf"></div>
<svg style="position:absolute;left:470.19px;top:657.0px;" width="5" height="5" viewBox="0 0 5 5" fill="none"><path d="M0 0H5L0 5Z" fill="#0b6b22"/></svg>
<div class="t" style="left:481.99px;top:675.28px;font-size:12.6px;color:#262626;font-weight:400;">1</div>
<div style="position:absolute;left:630.55px;top:657.8px;width:1.3px;height:45.700000000000045px;background:#cfcfcf"></div>
<svg style="position:absolute;left:551.02px;top:657.0px;" width="5" height="5" viewBox="0 0 5 5" fill="none"><path d="M0 0H5L0 5Z" fill="#0b6b22"/></svg>
<div class="t" style="left:562.82px;top:675.28px;font-size:12.6px;color:#262626;font-weight:400;">0</div>
<div style="position:absolute;left:711.38px;top:657.8px;width:1.3px;height:45.700000000000045px;background:#cfcfcf"></div>
<svg style="position:absolute;left:631.85px;top:657.0px;" width="5" height="5" viewBox="0 0 5 5" fill="none"><path d="M0 0H5L0 5Z" fill="#0b6b22"/></svg>
<div class="t" style="left:643.65px;top:675.28px;font-size:12.6px;color:#262626;font-weight:400;">0</div>
<div style="position:absolute;left:792.2099999999999px;top:657.8px;width:1.3px;height:45.700000000000045px;background:#cfcfcf"></div>
<svg style="position:absolute;left:712.6800000000001px;top:657.0px;" width="5" height="5" viewBox="0 0 5 5" fill="none"><path d="M0 0H5L0 5Z" fill="#0b6b22"/></svg>
<div class="t" style="left:724.48px;top:675.28px;font-size:12.6px;color:#262626;font-weight:400;">0</div>
<div style="position:absolute;left:873.04px;top:657.8px;width:1.3px;height:45.700000000000045px;background:#cfcfcf"></div>
<svg style="position:absolute;left:793.51px;top:657.0px;" width="5" height="5" viewBox="0 0 5 5" fill="none"><path d="M0 0H5L0 5Z" fill="#0b6b22"/></svg>
<div class="t" style="left:805.31px;top:675.28px;font-size:12.6px;color:#262626;font-weight:400;">0</div>
<div style="position:absolute;left:953.87px;top:657.8px;width:1.3px;height:45.700000000000045px;background:#cfcfcf"></div>
<svg style="position:absolute;left:874.34px;top:657.0px;" width="5" height="5" viewBox="0 0 5 5" fill="none"><path d="M0 0H5L0 5Z" fill="#0b6b22"/></svg>
<div class="t" style="left:886.14px;top:675.28px;font-size:12.6px;color:#262626;font-weight:400;">0</div>
<div style="position:absolute;left:1034.7px;top:657.8px;width:1.3px;height:45.700000000000045px;background:#cfcfcf"></div>
<svg style="position:absolute;left:955.1700000000001px;top:657.0px;" width="5" height="5" viewBox="0 0 5 5" fill="none"><path d="M0 0H5L0 5Z" fill="#0b6b22"/></svg>
<div class="t" style="left:966.97px;top:675.28px;font-size:12.6px;color:#262626;font-weight:400;">0</div>
<div style="position:absolute;left:1115.5300000000002px;top:657.8px;width:1.3px;height:45.700000000000045px;background:#cfcfcf"></div>
<svg style="position:absolute;left:1036.0px;top:657.0px;" width="5" height="5" viewBox="0 0 5 5" fill="none"><path d="M0 0H5L0 5Z" fill="#0b6b22"/></svg>
<div class="t" style="left:1047.80px;top:675.28px;font-size:12.6px;color:#262626;font-weight:400;">0</div>
<div style="position:absolute;left:1196.3600000000001px;top:657.8px;width:1.3px;height:45.700000000000045px;background:#cfcfcf"></div>
<svg style="position:absolute;left:1116.8300000000002px;top:657.0px;" width="5" height="5" viewBox="0 0 5 5" fill="none"><path d="M0 0H5L0 5Z" fill="#0b6b22"/></svg>
<div class="t" style="left:1128.63px;top:675.28px;font-size:12.6px;color:#262626;font-weight:400;">0</div>
<div style="position:absolute;left:1197.46px;top:658.5999999999999px;width:80.82999999999993px;height:44.90000000000005px;background:#808080"></div>
<div style="position:absolute;left:1197.46px;top:657.5px;width:80.82999999999993px;height:1.3px;background:#a3a3a3"></div>
<div class="t" style="left:1209.76px;top:675.28px;font-size:12.6px;color:#fff;font-weight:400;">4</div>
<div style="position:absolute;left:1578px;top:223.5px;width:22px;height:652px;background:#E7E8EC"></div>
<div style="position:absolute;left:1581px;top:229px;width:16.7px;height:615.5px;background:#fff;border-radius:8px"></div>
<svg style="position:absolute;left:1585px;top:229.3px;" width="9" height="7" viewBox="0 0 9 7" fill="none"><path d="M4.5 0.3L8.8 6.7H0.2Z" fill="#6b6b6b" stroke="#6b6b6b" stroke-width="0.6" stroke-linejoin="round"/></svg>
<div style="position:absolute;left:1585px;top:241.7px;width:9px;height:546.3px;background:#707070;border-radius:4.5px"></div>
<svg style="position:absolute;left:1585px;top:832.8px;" width="9" height="7" viewBox="0 0 9 7" fill="none"><path d="M4.5 6.7L8.8 0.3H0.2Z" fill="#6b6b6b" stroke="#6b6b6b" stroke-width="0.6" stroke-linejoin="round"/></svg>
<div style="position:absolute;left:0px;top:843px;width:1578px;height:33px;background:#E7E8EC"></div>
<div style="position:absolute;left:15.7px;top:855px;width:2.1px;height:2.1px;background:#555;border-radius:50%"></div>
<div style="position:absolute;left:15.7px;top:859.3px;width:2.1px;height:2.1px;background:#555;border-radius:50%"></div>
<div style="position:absolute;left:15.7px;top:863.6px;width:2.1px;height:2.1px;background:#555;border-radius:50%"></div>
<div style="position:absolute;left:33.75px;top:851.8px;width:1544.25px;height:16.2px;background:#F7F7F7;border-radius:8px"></div>
<svg style="position:absolute;left:38.75px;top:855.5px;" width="7" height="9" viewBox="0 0 7 9" fill="none"><path d="M0.3 4.5L6.7 0.2V8.8Z" fill="#6b6b6b" stroke="#6b6b6b" stroke-width="0.6" stroke-linejoin="round"/></svg>
<div style="position:absolute;left:51.25px;top:855.3px;width:1249.4px;height:8.7px;background:#6e6e6e;border-radius:4.35px"></div>
<svg style="position:absolute;left:1566px;top:855px;" width="7.4" height="9" viewBox="0 0 7.4 9" fill="none"><path d="M7.1 4.5L0.3 0.2V8.8Z" fill="#6b6b6b" stroke="#6b6b6b" stroke-width="0.6" stroke-linejoin="round"/></svg>
<div style="position:absolute;left:0px;top:876px;width:1600px;height:24px;background:#F3F3F3"></div>
<div style="position:absolute;left:0px;top:875.6px;width:1600px;height:1.6px;background:#d9d9dc"></div>
<div class="t" style="left:11.75px;top:883.19px;font-size:11px;color:#3b3b3b;font-weight:400;transform:scaleX(0.9884);transform-origin:0 0;">Pronto</div>
<svg style="position:absolute;left:66px;top:882px;" width="16" height="14" viewBox="0 0 16 14" fill="none"><path d="M6 12H0.7V0.7H14.2V6" stroke="#333" stroke-width="1.2" fill="none"/><path d="M0.7 3H14.2" stroke="#333" stroke-width="1.6"/><path d="M3 5.5V9.5" stroke="#555" stroke-width="1" stroke-dasharray="1 0.6"/><circle cx="10" cy="9" r="4.3" fill="#F3F3F3" stroke="#333" stroke-width="1.2"/><circle cx="10" cy="9" r="2.1" fill="#222"/></svg>
<svg style="position:absolute;left:98px;top:881px;" width="17" height="16" viewBox="0 0 17 16" fill="none"><circle cx="7.5" cy="2.6" r="1.7" stroke="#333" stroke-width="1.1" fill="none"/><path d="M5.8 4.6L2.6 3.2C1.6 2.8 0.9 4.1 1.9 4.6L5.3 6.4L5 9.5L3.9 13.2C3.6 14.4 5.2 14.8 5.6 13.7L7.5 10.2" stroke="#333" stroke-width="1.1" stroke-linejoin="round" fill="none"/><path d="M9.2 4.6L12.4 3.2C13.4 2.8 14.1 4.1 13.1 4.6L9.7 6.4L9.8 8" stroke="#333" stroke-width="1.1" stroke-linejoin="round" fill="none"/><path d="M9 7.5L15.6 14.6M15.6 7.5L9 14.6" stroke="#444" stroke-width="1"/></svg>
<div class="t" style="left:118.00px;top:883.19px;font-size:11px;color:#262626;font-weight:700;transform:scaleX(0.9576);transform-origin:0 0;">Acessibilidade: investigar</div>
<svg style="position:absolute;left:1156px;top:882px;" width="17" height="14" viewBox="0 0 17 14" fill="none"><path d="M9 11H0.6V0.6H15V6" stroke="#444" stroke-width="1.1" fill="none"/><circle cx="12.5" cy="10.5" r="2.6" stroke="#444" stroke-width="1.5" stroke-dasharray="1.4 0.9" fill="none"/></svg>
<div class="t" style="left:1174.40px;top:883.49px;font-size:11px;color:#3b3b3b;font-weight:400;transform:scaleX(0.9813);transform-origin:0 0;">Exibir Configurações</div>
<div style="position:absolute;left:1295.3px;top:877px;width:41.3px;height:21.75px;background:#DEDEDE"></div>
<svg style="position:absolute;left:1308.4px;top:881px;" width="14" height="14" viewBox="0 0 14 14" fill="none"><rect x="0.6" y="0.6" width="12.8" height="12.8" stroke="#444" stroke-width="1.1" fill="none"/><path d="M4.9 0.6V13.4M9.1 0.6V13.4M0.6 4.9H13.4M0.6 9.1H13.4" stroke="#444" stroke-width="1.1"/></svg>
<svg style="position:absolute;left:1350px;top:881px;" width="15" height="14" viewBox="0 0 15 14" fill="none"><rect x="0.6" y="0.6" width="13.8" height="12.8" stroke="#444" stroke-width="1.1" fill="none"/><rect x="3.5" y="3" width="8" height="8" stroke="#444" stroke-width="1" fill="none"/><path d="M5 5.2H10M5 7H10M5 8.8H10" stroke="#444" stroke-width="0.9"/></svg>
<svg style="position:absolute;left:1391.5px;top:881px;" width="15" height="14" viewBox="0 0 15 14" fill="none"><path d="M0.6 13.4V0.6H14.4V13.4H0.6" stroke="#444" stroke-width="1.1" fill="none"/><path d="M5.5 0.6V7.5H9.5V0.6M0.6 13.4H14.4" stroke="#444" stroke-width="1.1" fill="none"/></svg>
<div style="position:absolute;left:1426px;top:887.3px;width:7.75px;height:1.2px;background:#444"></div>
<div style="position:absolute;left:1439px;top:887.5px;width:104px;height:0.9px;background:#777"></div>
<div style="position:absolute;left:1483.75px;top:882.5px;width:4.25px;height:11.25px;background:#555"></div>
<div style="position:absolute;left:1490.3px;top:884.5px;width:0.8px;height:7px;background:#666"></div>
<div style="position:absolute;left:1548.4px;top:887.3px;width:7.85px;height:1.2px;background:#444"></div>
<div style="position:absolute;left:1551.7px;top:884px;width:1.2px;height:7.85px;background:#444"></div>
<div class="t" style="left:1570.30px;top:883.69px;font-size:11px;color:#3b3b3b;font-weight:400;transform:scaleX(0.8955);transform-origin:0 0;">90%</div>
</body></html>
